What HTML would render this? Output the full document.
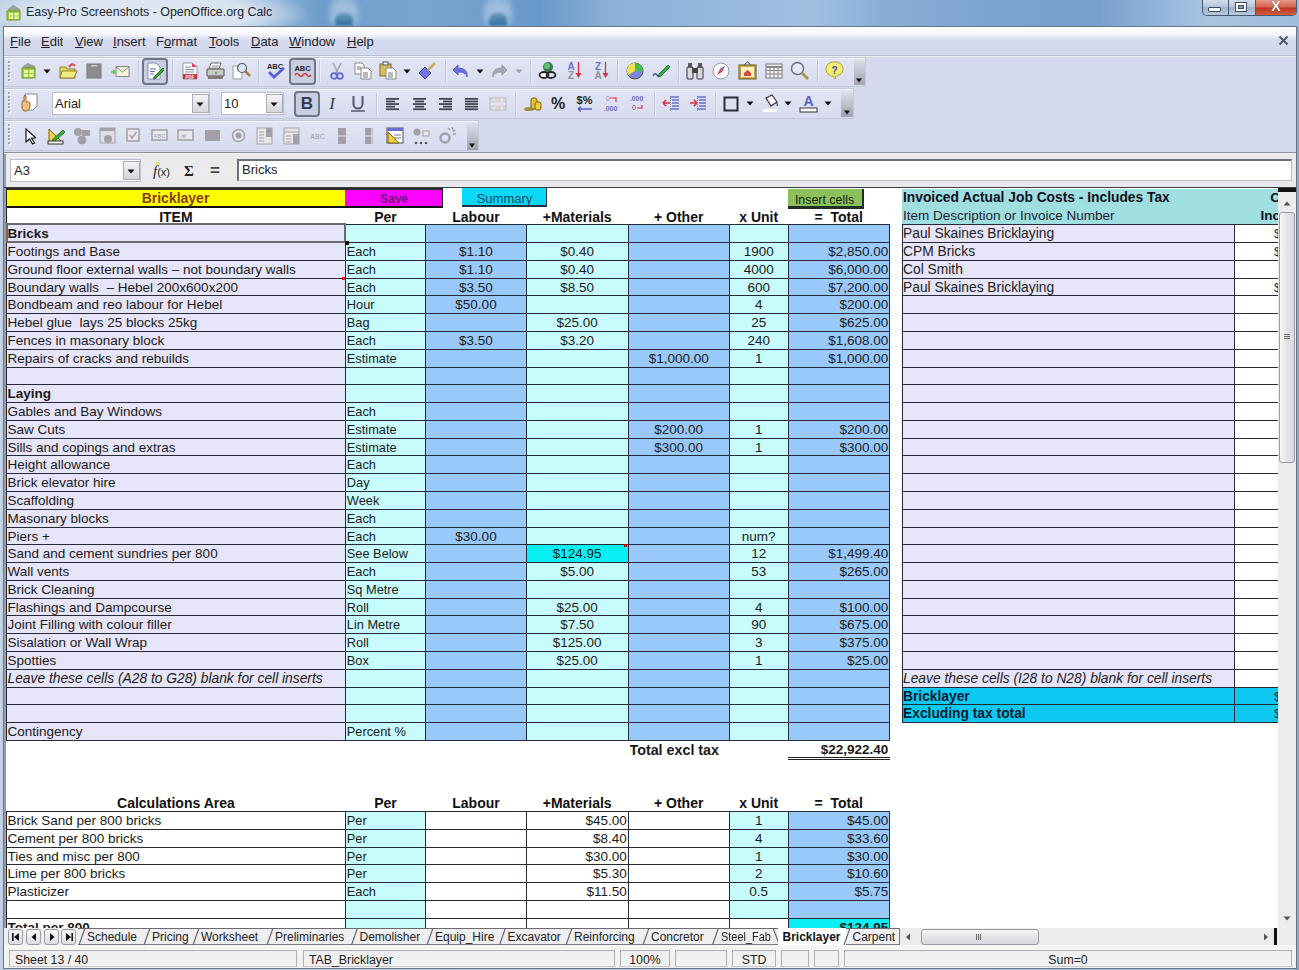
<!DOCTYPE html>
<html><head><meta charset="utf-8"><style>
html,body{margin:0;padding:0}
body{width:1299px;height:970px;overflow:hidden;position:relative;background:linear-gradient(90deg,#c4d4e6 0px,#b8cce2 4px,#a0bcdc 1290px,#8ea4bc 1297px);font-family:"Liberation Sans",sans-serif;font-size:13.5px;color:#1a1a1a}
.a{position:absolute}
.t{white-space:nowrap;overflow:hidden}
</style></head><body>
<div class="a" style="left:0;top:0;width:1299px;height:27px;background:linear-gradient(90deg,#b9cde2 0px,#b4c9e0 230px,#8fb3d8 280px,#6e9ccc 320px,#7aa5d0 420px,#6898ca 540px,#8cb0d8 610px,#96b8dc 720px,#a0c0e0 810px,#8aafd7 880px,#7ca5d1 980px,#78a0ce 1100px,#98b8dc 1170px,#a8c4e0 1210px,#9dbcdc 1299px)"></div><div class="a" style="left:-30px;top:-14px;width:340px;height:56px;background:radial-gradient(closest-side,rgba(228,236,245,0.95) 0%,rgba(222,232,243,0.85) 65%,rgba(210,225,240,0) 100%)"></div><div class="a" style="left:330px;top:-2px;width:28px;height:30px;border-radius:12px;background:rgba(175,200,225,0.75);filter:blur(3px)"></div><div class="a" style="left:335px;top:13px;width:18px;height:13px;border-radius:7px 7px 2px 2px;background:linear-gradient(180deg,rgba(80,140,180,0.7),rgba(40,105,150,0.95));filter:blur(1.5px)"></div><div class="a" style="left:484px;top:-2px;width:28px;height:30px;border-radius:12px;background:rgba(175,200,225,0.75);filter:blur(3px)"></div><div class="a" style="left:489px;top:13px;width:18px;height:13px;border-radius:7px 7px 2px 2px;background:linear-gradient(180deg,rgba(80,140,180,0.7),rgba(40,105,150,0.95));filter:blur(1.5px)"></div><svg class="a" style="left:5px;top:4px" width="17" height="17" viewBox="0 0 17 17"><path d="M3 5 L8 1 L15 5 L15 7 L3 7z" fill="#9aa09a"/><rect x="2" y="7" width="13" height="9" fill="#a8d040" stroke="#6d9a20"/><rect x="4" y="9" width="4" height="2.5" fill="#e8f6b0"/><rect x="9.5" y="9" width="4" height="2.5" fill="#e8f6b0"/><rect x="4" y="12.5" width="4" height="2.5" fill="#e8f6b0"/><rect x="9.5" y="12.5" width="4" height="2.5" fill="#e8f6b0"/></svg><div class="a t" style="left:26px;top:4px;font-size:12.4px;color:#1c2530;line-height:17px">Easy-Pro Screenshots - OpenOffice.org Calc</div><div class="a" style="left:1202px;top:-1px;width:95px;height:17px;box-sizing:border-box;border:1px solid #4a5a70;border-top:none;border-radius:0 0 5px 5px;overflow:hidden;background:linear-gradient(180deg,#d4e0ee 0%,#b8c8dc 45%,#9fb2c8 55%,#b8cade 100%)"><div class="a" style="left:52px;top:0;width:42px;height:17px;background:linear-gradient(180deg,#eaa090 0%,#d86850 45%,#c03a20 55%,#d06048 100%);border-left:1px solid #4a5a70"></div><div class="a" style="left:25px;top:0;width:1px;height:17px;background:#4a5a70"></div></div><div class="a" style="left:1208px;top:7px;width:11px;height:3px;background:#fff;border:1px solid #3a4a60;border-radius:1px"></div><div class="a" style="left:1236px;top:3px;width:6px;height:4px;border:2px solid #fff;box-shadow:0 0 0 1px #3a4a60,inset 0 0 0 1px #3a4a60;background:#8a9ab0"></div><div class="a t" style="left:1255px;top:-2px;width:42px;height:17px;line-height:17px;text-align:center;font-size:14px;font-weight:bold;color:#fff;text-shadow:0 0 1px #400">X</div><div class="a" style="left:3px;top:26px;width:1294px;height:943px;box-sizing:border-box;border:1px solid #6a7688;background:#d5d9ee"></div><div class="a" style="left:4px;top:152px;width:2px;height:816px;background:#9a9ea8"></div><div class="a" style="left:4px;top:27px;width:1292px;height:29px;background:linear-gradient(180deg,#fdfdfe 0%,#f6f7fb 25%,#e2e5f3 36%,#d6daee 45%,#d4d8ed 100%)"></div><div class="a" style="left:4px;top:55px;width:1292px;height:1px;background:#b9bfd6"></div><div class="a" style="left:4px;top:56px;width:1292px;height:1px;background:#eef0f8"></div><div class="a t" style="left:10px;top:33px;font-size:13px;line-height:17px;color:#1e1e2a"><u>F</u>ile</div><div class="a t" style="left:41px;top:33px;font-size:13px;line-height:17px;color:#1e1e2a"><u>E</u>dit</div><div class="a t" style="left:75px;top:33px;font-size:13px;line-height:17px;color:#1e1e2a"><u>V</u>iew</div><div class="a t" style="left:113px;top:33px;font-size:13px;line-height:17px;color:#1e1e2a"><u>I</u>nsert</div><div class="a t" style="left:156px;top:33px;font-size:13px;line-height:17px;color:#1e1e2a">F<u>o</u>rmat</div><div class="a t" style="left:209px;top:33px;font-size:13px;line-height:17px;color:#1e1e2a"><u>T</u>ools</div><div class="a t" style="left:251px;top:33px;font-size:13px;line-height:17px;color:#1e1e2a"><u>D</u>ata</div><div class="a t" style="left:289px;top:33px;font-size:13px;line-height:17px;color:#1e1e2a"><u>W</u>indow</div><div class="a t" style="left:347px;top:33px;font-size:13px;line-height:17px;color:#1e1e2a"><u>H</u>elp</div><svg class="a" style="left:1278px;top:35px" width="11" height="11" viewBox="0 0 11 11"><path d="M1.5 1.5l8 8M9.5 1.5l-8 8" stroke="#505a68" stroke-width="2"/></svg><div class="a" style="left:5px;top:57px;width:861px;height:30px;box-sizing:border-box;border:1px solid #c4c9dc;border-left:none;background:linear-gradient(180deg,#e2e5f4 0%,#d8dcf0 100%);box-shadow:inset 0 1px 0 #f4f5fb"></div><div class="a" style="left:8px;top:61.0px;width:2px;height:2px;background:#9aa0b0;box-shadow:1px 1px 0 #fff"></div><div class="a" style="left:8px;top:64.5px;width:2px;height:2px;background:#9aa0b0;box-shadow:1px 1px 0 #fff"></div><div class="a" style="left:8px;top:68.0px;width:2px;height:2px;background:#9aa0b0;box-shadow:1px 1px 0 #fff"></div><div class="a" style="left:8px;top:71.5px;width:2px;height:2px;background:#9aa0b0;box-shadow:1px 1px 0 #fff"></div><div class="a" style="left:8px;top:75.0px;width:2px;height:2px;background:#9aa0b0;box-shadow:1px 1px 0 #fff"></div><div class="a" style="left:8px;top:78.5px;width:2px;height:2px;background:#9aa0b0;box-shadow:1px 1px 0 #fff"></div><div class="a" style="left:5px;top:88px;width:849px;height:31px;box-sizing:border-box;border:1px solid #c4c9dc;border-left:none;background:linear-gradient(180deg,#e2e5f4 0%,#d8dcf0 100%);box-shadow:inset 0 1px 0 #f4f5fb"></div><div class="a" style="left:8px;top:92.0px;width:2px;height:2px;background:#9aa0b0;box-shadow:1px 1px 0 #fff"></div><div class="a" style="left:8px;top:95.5px;width:2px;height:2px;background:#9aa0b0;box-shadow:1px 1px 0 #fff"></div><div class="a" style="left:8px;top:99.0px;width:2px;height:2px;background:#9aa0b0;box-shadow:1px 1px 0 #fff"></div><div class="a" style="left:8px;top:102.5px;width:2px;height:2px;background:#9aa0b0;box-shadow:1px 1px 0 #fff"></div><div class="a" style="left:8px;top:106.0px;width:2px;height:2px;background:#9aa0b0;box-shadow:1px 1px 0 #fff"></div><div class="a" style="left:8px;top:109.5px;width:2px;height:2px;background:#9aa0b0;box-shadow:1px 1px 0 #fff"></div><div class="a" style="left:5px;top:120px;width:474px;height:31px;box-sizing:border-box;border:1px solid #c4c9dc;border-left:none;background:linear-gradient(180deg,#e2e5f4 0%,#d8dcf0 100%);box-shadow:inset 0 1px 0 #f4f5fb"></div><div class="a" style="left:8px;top:124.0px;width:2px;height:2px;background:#9aa0b0;box-shadow:1px 1px 0 #fff"></div><div class="a" style="left:8px;top:127.5px;width:2px;height:2px;background:#9aa0b0;box-shadow:1px 1px 0 #fff"></div><div class="a" style="left:8px;top:131.0px;width:2px;height:2px;background:#9aa0b0;box-shadow:1px 1px 0 #fff"></div><div class="a" style="left:8px;top:134.5px;width:2px;height:2px;background:#9aa0b0;box-shadow:1px 1px 0 #fff"></div><div class="a" style="left:8px;top:138.0px;width:2px;height:2px;background:#9aa0b0;box-shadow:1px 1px 0 #fff"></div><div class="a" style="left:8px;top:141.5px;width:2px;height:2px;background:#9aa0b0;box-shadow:1px 1px 0 #fff"></div><svg class="a" style="left:20px;top:62px" width="17" height="17" viewBox="0 0 17 17"><path d="M3 4 L8 1 L15 4 L15 6 L3 6z" fill="#9aa09a"/><rect x="2" y="6" width="13" height="10" fill="#9ccf3c" stroke="#6d9a20"/><rect x="4" y="8" width="4" height="3" fill="#e8f6b0"/><rect x="9.5" y="8" width="4" height="3" fill="#e8f6b0"/><rect x="4" y="12" width="4" height="3" fill="#e8f6b0"/><rect x="9.5" y="12" width="4" height="3" fill="#e8f6b0"/></svg><svg class="a" style="left:43px;top:69px" width="8" height="5" viewBox="0 0 8 5"><path d="M0.5 0.5h7l-3.5 4z" fill="#111"/></svg><svg class="a" style="left:59px;top:62px" width="19" height="17" viewBox="0 0 19 17"><path d="M1 5h6l1 2h8v9H1z" fill="#e8d860" stroke="#8a8030"/><path d="M3 9h15l-3 7H1z" fill="#f2ec80" stroke="#8a8030"/><path d="M10 5 Q13 0 16 4" stroke="#e04050" stroke-width="2" fill="none"/></svg><svg class="a" style="left:86px;top:63px" width="16" height="16" viewBox="0 0 16 16"><rect x="1" y="1" width="14" height="14" fill="#8c8c8c" stroke="#777"/><rect x="5" y="2" width="6" height="1.5" fill="#cfcfcf"/></svg><svg class="a" style="left:111px;top:65px" width="19" height="13" viewBox="0 0 19 13"><rect x="5" y="1.5" width="13" height="10" fill="#f4f4e0" stroke="#888"/><path d="M5 2l6.5 5 6.5-5" stroke="#888" fill="none"/><path d="M0 7h5M2 5l3 2-3 2" stroke="#50d050" stroke-width="1.5" fill="none"/></svg><div class="a" style="left:138px;top:60px;width:1px;height:22px;background:#c2c6d8;box-shadow:1px 0 0 #eceef8"></div><div class="a" style="left:142px;top:58px;width:26px;height:27px;box-sizing:border-box;border:2px solid #6f7686;border-radius:4px;background:#c9cde0"></div><svg class="a" style="left:146px;top:62px" width="18" height="18" viewBox="0 0 18 18"><path d="M2 1h8l4 4v12H2z" fill="#fff" stroke="#8890a0"/><path d="M4 7h6M4 9.5h5M4 12h4" stroke="#6070c0"/><path d="M8 15l9-9 1.5 1.5-9 9-2 .5z" fill="#30b040" stroke="#1a6a20"/></svg><div class="a" style="left:172px;top:60px;width:1px;height:22px;background:#c2c6d8;box-shadow:1px 0 0 #eceef8"></div><svg class="a" style="left:182px;top:62px" width="16" height="18" viewBox="0 0 16 18"><path d="M1 1h9l5 4v12H1z" fill="#fff" stroke="#999"/><path d="M10 1v4h5z" fill="#e04050"/><path d="M3 5h6M3 7.5h9M3 10h9" stroke="#8080c0"/><rect x="1" y="12" width="14" height="5" fill="#d03040"/><text x="8" y="16.5" font-size="4.5" fill="#fff" text-anchor="middle" font-family="Liberation Sans" font-weight="bold">PDF</text></svg><svg class="a" style="left:206px;top:62px" width="19" height="18" viewBox="0 0 19 18"><path d="M5 1h10l-2 6H3z" fill="#fff" stroke="#666"/><path d="M1 7h17v7H1z" fill="#c8c8c8" stroke="#555"/><path d="M2 14h15v3H2z" fill="#7c7c7c"/><path d="M6 4h7M5 6h7" stroke="#888"/><circle cx="10" cy="11" r="1" fill="#30a030"/></svg><svg class="a" style="left:232px;top:62px" width="19" height="18" viewBox="0 0 19 18"><path d="M1 4h9v13H1z" fill="#fff" stroke="#999"/><circle cx="10" cy="6" r="4.5" fill="#d8e4f8" stroke="#555" stroke-width="1.2"/><path d="M13 9l5 5" stroke="#a08040" stroke-width="2.5"/></svg><div class="a" style="left:258px;top:60px;width:1px;height:22px;background:#c2c6d8;box-shadow:1px 0 0 #eceef8"></div><svg class="a" style="left:265px;top:61px" width="21" height="19" viewBox="0 0 21 19"><text x="10" y="7.5" font-size="7.5" font-weight="bold" fill="#223" text-anchor="middle" font-family="Liberation Sans">ABC</text><path d="M4 11l5 5 10-9" stroke="#5860d8" stroke-width="2.8" fill="none"/></svg><div class="a" style="left:289px;top:58px;width:27px;height:27px;box-sizing:border-box;border:2px solid #6f7686;border-radius:4px;background:#c9cde0"></div><svg class="a" style="left:292px;top:62px" width="21" height="18" viewBox="0 0 21 18"><text x="10.5" y="9" font-size="7.5" font-weight="bold" fill="#223" text-anchor="middle" font-family="Liberation Sans">ABC</text><path d="M3 13q2-3 4 0t4 0 4 0 4 0" stroke="#e03040" stroke-width="1.4" fill="none"/></svg><div class="a" style="left:319px;top:60px;width:1px;height:22px;background:#c2c6d8;box-shadow:1px 0 0 #eceef8"></div><svg class="a" style="left:329px;top:62px" width="16" height="18" viewBox="0 0 16 18"><path d="M4 1l5 10M12 1L7 11" stroke="#a0a4b0" stroke-width="1.6"/><circle cx="5" cy="14" r="2.8" fill="none" stroke="#6068d0" stroke-width="1.8"/><circle cx="11" cy="14" r="2.8" fill="none" stroke="#6068d0" stroke-width="1.8"/></svg><svg class="a" style="left:354px;top:62px" width="18" height="18" viewBox="0 0 18 18"><path d="M1 1h7l2 2v9H1z" fill="#fff" stroke="#888"/><path d="M7 6h7l3 3v8H7z" fill="#fff" stroke="#888"/><path d="M3 5h4M3 7h4M9 11h5M9 13h5M9 15h5" stroke="#777"/></svg><svg class="a" style="left:379px;top:61px" width="18" height="19" viewBox="0 0 18 19"><rect x="1" y="3" width="11" height="12" fill="#d8c060" stroke="#7a6a20"/><rect x="4" y="1" width="5" height="3" fill="#fff" stroke="#555"/><path d="M7 7h7l3 3v8H7z" fill="#fff" stroke="#888"/><path d="M9 12h5M9 14h5M9 16h5" stroke="#777"/></svg><svg class="a" style="left:403px;top:69px" width="8" height="5" viewBox="0 0 8 5"><path d="M0.5 0.5h7l-3.5 4z" fill="#111"/></svg><svg class="a" style="left:418px;top:62px" width="19" height="18" viewBox="0 0 19 18"><path d="M1 11l6-6 6 6-6 6z" fill="#7078e0" stroke="#3a40a0"/><path d="M10 8l7-7" stroke="#c8b050" stroke-width="2.5"/></svg><div class="a" style="left:445px;top:60px;width:1px;height:22px;background:#c2c6d8;box-shadow:1px 0 0 #eceef8"></div><svg class="a" style="left:452px;top:63px" width="18" height="16" viewBox="0 0 18 16"><path d="M6 2L1 7l5 5V9c5 0 8 1 9 5 1-6-3-9-9-9z" fill="#6a70e8" stroke="#4a50c0" stroke-width="0.8"/></svg><svg class="a" style="left:476px;top:69px" width="8" height="5" viewBox="0 0 8 5"><path d="M0.5 0.5h7l-3.5 4z" fill="#111"/></svg><svg class="a" style="left:490px;top:63px" width="19" height="16" viewBox="0 0 19 16"><path d="M12 2l5 5-5 5V9C7 9 4 10 3 14 2 8 6 5 12 5z" fill="#a8aab0" stroke="#8a8c90" stroke-width="0.8"/></svg><svg class="a" style="left:515px;top:69px" width="8" height="5" viewBox="0 0 8 5"><path d="M0.5 0.5h7l-3.5 4z" fill="#a0a2aa"/></svg><div class="a" style="left:530px;top:60px;width:1px;height:22px;background:#c2c6d8;box-shadow:1px 0 0 #eceef8"></div><svg class="a" style="left:538px;top:61px" width="19" height="19" viewBox="0 0 19 19"><circle cx="10" cy="6" r="5" fill="#3a7a50"/><circle cx="9" cy="5" r="3" fill="#60c070"/><ellipse cx="6" cy="14" rx="4.5" ry="3" fill="#fff" stroke="#222" stroke-width="1.8"/><ellipse cx="13" cy="14" rx="4.5" ry="3" fill="none" stroke="#222" stroke-width="1.8"/></svg><svg class="a" style="left:566px;top:61px" width="17" height="19" viewBox="0 0 17 19"><text x="5" y="8.5" font-size="10" font-weight="bold" fill="#6a70d0" text-anchor="middle" font-family="Liberation Sans">A</text><text x="5" y="18" font-size="10" font-weight="bold" fill="#909098" text-anchor="middle" font-family="Liberation Sans">Z</text><path d="M12.5 1v13" stroke="#d03040" stroke-width="1.3"/><path d="M9.5 12l3 5 3-5z" fill="#d03040"/></svg><svg class="a" style="left:593px;top:61px" width="17" height="19" viewBox="0 0 17 19"><text x="5" y="8.5" font-size="10" font-weight="bold" fill="#6a70d0" text-anchor="middle" font-family="Liberation Sans">Z</text><text x="5" y="18" font-size="10" font-weight="bold" fill="#909098" text-anchor="middle" font-family="Liberation Sans">A</text><path d="M12.5 1v13" stroke="#d03040" stroke-width="1.3"/><path d="M9.5 12l3 5 3-5z" fill="#d03040"/></svg><div class="a" style="left:617px;top:60px;width:1px;height:22px;background:#c2c6d8;box-shadow:1px 0 0 #eceef8"></div><svg class="a" style="left:626px;top:62px" width="18" height="18" viewBox="0 0 18 18"><circle cx="9" cy="9" r="8" fill="#7c86e0" stroke="#555"/><path d="M9 9V1A8 8 0 0 1 17 9z" fill="#40c040"/><path d="M9 9V1A8 8 0 0 0 2 13z" fill="#f0e050"/></svg><svg class="a" style="left:652px;top:62px" width="18" height="18" viewBox="0 0 18 18"><path d="M1 14q2-4 4-1t3 0" stroke="#4a50b0" stroke-width="1.4" fill="none"/><path d="M7 12l9-9 2 2-9 9-3 1z" fill="#30b040" stroke="#1a6a20" stroke-width="0.8"/></svg><div class="a" style="left:678px;top:60px;width:1px;height:22px;background:#c2c6d8;box-shadow:1px 0 0 #eceef8"></div><svg class="a" style="left:686px;top:62px" width="18" height="18" viewBox="0 0 18 18"><rect x="1" y="5" width="6" height="12" rx="1" fill="#d8d8e0" stroke="#333"/><rect x="11" y="5" width="6" height="12" rx="1" fill="#d8d8e0" stroke="#333"/><rect x="2" y="1" width="4" height="5" fill="#555"/><rect x="12" y="1" width="4" height="5" fill="#555"/><rect x="6" y="6" width="6" height="5" fill="#444"/></svg><svg class="a" style="left:712px;top:62px" width="18" height="18" viewBox="0 0 18 18"><circle cx="9" cy="9" r="8" fill="#f8f8f8" stroke="#999"/><path d="M13 4l-3 6-5 3 3-6z" fill="#e04050"/><path d="M13 4l-5 3 2 3z" fill="#6a70d0"/></svg><svg class="a" style="left:738px;top:61px" width="19" height="19" viewBox="0 0 19 19"><path d="M6 4l3.5-3 3.5 3" stroke="#555" fill="none"/><rect x="1" y="4" width="17" height="14" fill="#c8a850" stroke="#6a5a20"/><rect x="3" y="6" width="13" height="10" fill="#fff4c0"/><path d="M6 12l3.5-3 3.5 3v3H6z" fill="#e04040"/></svg><svg class="a" style="left:765px;top:63px" width="18" height="16" viewBox="0 0 18 16"><rect x="1" y="1" width="16" height="14" fill="#f0f0f4" stroke="#777"/><path d="M1 4h16" stroke="#888" stroke-width="2"/><path d="M5 4v11M9 4v11M13 4v11M1 7.5h16M1 11h16" stroke="#888"/></svg><svg class="a" style="left:790px;top:61px" width="19" height="19" viewBox="0 0 19 19"><circle cx="7.5" cy="7.5" r="6" fill="#e4ecfa" stroke="#6a6a70" stroke-width="1.4"/><path d="M12 12l6 6" stroke="#b09050" stroke-width="2.8"/></svg><div class="a" style="left:817px;top:60px;width:1px;height:22px;background:#c2c6d8;box-shadow:1px 0 0 #eceef8"></div><svg class="a" style="left:825px;top:61px" width="19" height="19" viewBox="0 0 19 19"><path d="M9.5 1C4 1 1 4 1 8c0 4 3 7 7 7l2 3 1-3c4-1 7-3 7-7 0-4-3-7-8.5-7z" fill="#f4f070" stroke="#b0a020"/><text x="9.5" y="12.5" font-size="10" font-weight="bold" fill="#4a40b0" text-anchor="middle" font-family="Liberation Sans">?</text></svg><div class="a" style="left:854px;top:59px;width:11px;height:26px;background:linear-gradient(180deg,#dfe1ea 0%,#b8bac4 60%,#9fa2ac 100%)"></div><svg class="a" style="left:855px;top:78px" width="8" height="5" viewBox="0 0 8 5"><path d="M1 0.5h6l-3 4z" fill="#111"/></svg><svg class="a" style="left:20px;top:93px" width="18" height="19" viewBox="0 0 18 19"><path d="M5 1h12v12l-4 4H5z" fill="#fff" stroke="#888"/><path d="M2 10q0-3 2-2v-5q1-1 2 0v6q3-1 4 1v4q-1 4-4 4H4q-3-2-2-8z" fill="#f0c080" stroke="#805020" stroke-width="0.8"/></svg><div class="a" style="left:52px;top:92px;width:158px;height:23px;box-sizing:border-box;border:1px solid #b8bccc;background:#fff"></div><div class="a t" style="left:55px;top:92px;height:23px;line-height:23px;font-size:13px;color:#222">Arial</div><div class="a" style="left:192px;top:94px;width:17px;height:19px;box-sizing:border-box;border:1px solid #a8acb8;background:linear-gradient(180deg,#f4f4f6,#d4d6dc)"></div><svg class="a" style="left:196px;top:102px" width="8" height="5" viewBox="0 0 8 5"><path d="M0.5 0.5h7l-3.5 4z" fill="#111"/></svg><div class="a" style="left:221px;top:92px;width:63px;height:23px;box-sizing:border-box;border:1px solid #b8bccc;background:#fff"></div><div class="a t" style="left:224px;top:92px;height:23px;line-height:23px;font-size:13px;color:#222">10</div><div class="a" style="left:266px;top:94px;width:17px;height:19px;box-sizing:border-box;border:1px solid #a8acb8;background:linear-gradient(180deg,#f4f4f6,#d4d6dc)"></div><svg class="a" style="left:270px;top:102px" width="8" height="5" viewBox="0 0 8 5"><path d="M0.5 0.5h7l-3.5 4z" fill="#111"/></svg><div class="a" style="left:294px;top:91px;width:26px;height:26px;box-sizing:border-box;border:2px solid #6f7686;border-radius:4px;background:#c9cde0"></div><div class="a t" style="left:294px;top:91px;width:26px;height:26px;line-height:26px;text-align:center;font-size:17px;font-weight:bold;color:#333a50">B</div><div class="a t" style="left:323px;top:91px;width:18px;height:26px;line-height:26px;text-align:center;font-size:17px;font-style:italic;color:#333a50;font-family:Liberation Serif">I</div><svg class="a" style="left:350px;top:95px" width="16" height="18" viewBox="0 0 16 18"><path d="M3.5 1v8a4.5 4.5 0 0 0 9 0V1" stroke="#555a70" stroke-width="2" fill="none"/><path d="M1 16h14" stroke="#555a70" stroke-width="1.5"/></svg><div class="a" style="left:376px;top:93px;width:1px;height:22px;background:#c2c6d8;box-shadow:1px 0 0 #eceef8"></div><svg class="a" style="left:386px;top:98px" width="13" height="13" viewBox="0 0 13 13"><rect x="0" y="0.0" width="13" height="1.7" fill="#3c3e48"/><rect x="0" y="2.6" width="9" height="1.7" fill="#3c3e48"/><rect x="0" y="5.2" width="13" height="1.7" fill="#3c3e48"/><rect x="0" y="7.800000000000001" width="9" height="1.7" fill="#3c3e48"/><rect x="0" y="10.4" width="13" height="1.7" fill="#3c3e48"/></svg><svg class="a" style="left:413px;top:98px" width="13" height="13" viewBox="0 0 13 13"><rect x="0.0" y="0.0" width="13" height="1.7" fill="#3c3e48"/><rect x="2.0" y="2.6" width="9" height="1.7" fill="#3c3e48"/><rect x="0.0" y="5.2" width="13" height="1.7" fill="#3c3e48"/><rect x="2.0" y="7.800000000000001" width="9" height="1.7" fill="#3c3e48"/><rect x="0.0" y="10.4" width="13" height="1.7" fill="#3c3e48"/></svg><svg class="a" style="left:439px;top:98px" width="13" height="13" viewBox="0 0 13 13"><rect x="0" y="0.0" width="13" height="1.7" fill="#3c3e48"/><rect x="4" y="2.6" width="9" height="1.7" fill="#3c3e48"/><rect x="0" y="5.2" width="13" height="1.7" fill="#3c3e48"/><rect x="4" y="7.800000000000001" width="9" height="1.7" fill="#3c3e48"/><rect x="0" y="10.4" width="13" height="1.7" fill="#3c3e48"/></svg><svg class="a" style="left:465px;top:98px" width="13" height="13" viewBox="0 0 13 13"><rect x="0" y="0.0" width="13" height="1.7" fill="#3c3e48"/><rect x="0" y="2.6" width="13" height="1.7" fill="#3c3e48"/><rect x="0" y="5.2" width="13" height="1.7" fill="#3c3e48"/><rect x="0" y="7.800000000000001" width="13" height="1.7" fill="#3c3e48"/><rect x="0" y="10.4" width="13" height="1.7" fill="#3c3e48"/></svg><svg class="a" style="left:489px;top:97px" width="18" height="14" viewBox="0 0 18 14"><rect x="1" y="1" width="16" height="12" fill="#d8d8dc" stroke="#b8b8c0"/><path d="M1 7h16M5 1v3M5 10v3M13 1v3M13 10v3" stroke="#f8f8f8"/></svg><div class="a" style="left:515px;top:93px;width:1px;height:22px;background:#c2c6d8;box-shadow:1px 0 0 #eceef8"></div><svg class="a" style="left:523px;top:94px" width="19" height="18" viewBox="0 0 19 18"><ellipse cx="6" cy="15" rx="5" ry="2" fill="#a09040"/><rect x="8" y="4" width="6" height="11" rx="2" fill="#e8c030" stroke="#806010"/><rect x="12" y="8" width="6" height="8" rx="2" fill="#f0d040" stroke="#806010"/></svg><div class="a t" style="left:549px;top:92px;width:18px;height:24px;line-height:24px;text-align:center;font-size:16px;font-weight:bold;color:#222">%</div><svg class="a" style="left:575px;top:94px" width="19" height="19" viewBox="0 0 19 19"><text x="9.5" y="10" font-size="11" font-weight="bold" fill="#222" text-anchor="middle" font-family="Liberation Sans">$%</text><path d="M3 15h14M3 15l3-2.5M3 15l3 2.5" stroke="#5a60c8" stroke-width="1.5" fill="none"/></svg><svg class="a" style="left:602px;top:94px" width="17" height="19" viewBox="0 0 17 19"><text x="4" y="7" font-size="6.5" fill="#7a80d0" font-family="Liberation Sans">0</text><path d="M8 4h6v4" stroke="#d03040" stroke-width="1.2" fill="none"/><text x="8.5" y="16.5" font-size="7" font-weight="bold" fill="#6a70c0" text-anchor="middle" font-family="Liberation Sans">.000</text></svg><svg class="a" style="left:628px;top:94px" width="17" height="19" viewBox="0 0 17 19"><text x="8.5" y="7" font-size="7" font-weight="bold" fill="#6a70c0" text-anchor="middle" font-family="Liberation Sans">.000</text><text x="4" y="16" font-size="7" fill="#555" font-family="Liberation Sans">0</text><path d="M14 11v3H9" stroke="#d03040" stroke-width="1.2" fill="none"/></svg><div class="a" style="left:654px;top:93px;width:1px;height:22px;background:#c2c6d8;box-shadow:1px 0 0 #eceef8"></div><svg class="a" style="left:662px;top:95px" width="18" height="17" viewBox="0 0 18 17"><path d="M8 2h9M10 5h7M10 8h7M10 11h7M8 14h9" stroke="#6a70d0" stroke-width="1.4"/><path d="M1 8h7M1 8l3-3M1 8l3 3" stroke="#e03040" stroke-width="1.6" fill="none"/><path d="M8.5 1v15" stroke="#888" stroke-dasharray="1 1"/></svg><svg class="a" style="left:689px;top:95px" width="18" height="17" viewBox="0 0 18 17"><path d="M8 2h9M10 5h7M10 8h7M10 11h7M8 14h9" stroke="#6a70d0" stroke-width="1.4"/><path d="M1 8h7M8 8l-3-3M8 8l-3 3" stroke="#e03040" stroke-width="1.6" fill="none"/><path d="M8.5 1v15" stroke="#888" stroke-dasharray="1 1"/></svg><div class="a" style="left:715px;top:93px;width:1px;height:22px;background:#c2c6d8;box-shadow:1px 0 0 #eceef8"></div><svg class="a" style="left:723px;top:96px" width="16" height="16" viewBox="0 0 16 16"><rect x="1.5" y="1.5" width="13" height="13" fill="none" stroke="#2a2c38" stroke-width="2"/></svg><svg class="a" style="left:746px;top:101px" width="8" height="5" viewBox="0 0 8 5"><path d="M0.5 0.5h7l-3.5 4z" fill="#111"/></svg><svg class="a" style="left:762px;top:94px" width="17" height="19" viewBox="0 0 17 19"><path d="M4 4l6-3 5 7-6 4z" fill="#fff" stroke="#333" stroke-width="1.2"/><path d="M14 8q2 2 1 4" stroke="#333" fill="none"/><rect x="1" y="15" width="14" height="3" fill="#fff"/></svg><svg class="a" style="left:784px;top:101px" width="8" height="5" viewBox="0 0 8 5"><path d="M0.5 0.5h7l-3.5 4z" fill="#111"/></svg><svg class="a" style="left:799px;top:93px" width="19" height="20" viewBox="0 0 19 20"><text x="9.5" y="13" font-size="14" font-weight="bold" fill="#5a60d0" text-anchor="middle" font-family="Liberation Sans">A</text><rect x="1" y="15" width="17" height="4" fill="#fff" stroke="#333"/></svg><svg class="a" style="left:824px;top:101px" width="8" height="5" viewBox="0 0 8 5"><path d="M0.5 0.5h7l-3.5 4z" fill="#111"/></svg><div class="a" style="left:841px;top:91px;width:12px;height:26px;background:linear-gradient(180deg,#dfe1ea 0%,#b8bac4 60%,#9fa2ac 100%)"></div><svg class="a" style="left:843px;top:110px" width="8" height="5" viewBox="0 0 8 5"><path d="M1 0.5h6l-3 4z" fill="#111"/></svg><svg class="a" style="left:25px;top:128px" width="11" height="17" viewBox="0 0 11 17"><path d="M1 1v13l3.5-3 3 5 2-1-3-5h4.5z" fill="#fff" stroke="#111" stroke-width="1.2"/></svg><svg class="a" style="left:47px;top:127px" width="18" height="18" viewBox="0 0 18 18"><path d="M2 2v13h13z" fill="#f0d040" stroke="#806010"/><path d="M6 12l10-9 2 2-10 9-3 1z" fill="#30b040" stroke="#1a6a20" stroke-width="0.8"/><rect x="1" y="14" width="15" height="3" fill="#fff" stroke="#333"/></svg><svg class="a" style="left:73px;top:127px" width="18" height="18" viewBox="0 0 18 18"><circle cx="5" cy="5" r="4" fill="#a0a0a6"/><rect x="9" y="3" width="8" height="6" fill="#a0a0a6"/><circle cx="9" cy="13" r="4.5" fill="#a0a0a6"/></svg><svg class="a" style="left:99px;top:127px" width="17" height="18" viewBox="0 0 17 18"><rect x="1" y="1" width="15" height="15" fill="#e0e0e4" stroke="#a0a0a6"/><rect x="1" y="1" width="15" height="3" fill="#a0a0a6"/><circle cx="9" cy="12" r="4" fill="#a0a0a6"/></svg><svg class="a" style="left:126px;top:128px" width="14" height="15" viewBox="0 0 14 15"><rect x="1" y="1" width="12" height="12" fill="#e8e8ec" stroke="#a0a0a6" stroke-width="1.5"/><path d="M3.5 7l2.5 3 4.5-6" stroke="#a0a0a6" stroke-width="1.5" fill="none"/></svg><svg class="a" style="left:151px;top:129px" width="17" height="13" viewBox="0 0 17 13"><rect x="1" y="1" width="15" height="10" fill="#e8e8ec" stroke="#a0a0a6" stroke-width="1.5"/><text x="8.5" y="8.5" font-size="6" fill="#a0a0a6" text-anchor="middle" font-family="Liberation Sans">ABC</text></svg><svg class="a" style="left:177px;top:129px" width="17" height="13" viewBox="0 0 17 13"><rect x="1" y="1" width="15" height="10" fill="#e8e8ec" stroke="#a0a0a6" stroke-width="1.5"/><text x="7" y="8.5" font-size="6" fill="#a0a0a6" text-anchor="middle" font-family="Liberation Sans">#/</text></svg><svg class="a" style="left:205px;top:130px" width="15" height="11" viewBox="0 0 15 11"><rect x="0" y="0" width="15" height="11" fill="#a0a0a6"/></svg><svg class="a" style="left:231px;top:128px" width="15" height="15" viewBox="0 0 15 15"><circle cx="7.5" cy="7.5" r="6" fill="#e8e8ec" stroke="#a0a0a6" stroke-width="1.5"/><circle cx="7.5" cy="7.5" r="3" fill="#a0a0a6"/></svg><svg class="a" style="left:256px;top:127px" width="17" height="18" viewBox="0 0 17 18"><rect x="1" y="1" width="15" height="16" fill="#e8e8ec" stroke="#a0a0a6"/><rect x="10" y="1" width="6" height="9" fill="#a0a0a6"/><path d="M3 5h5M3 8h5M3 11h5M3 14h5" stroke="#a0a0a6"/></svg><svg class="a" style="left:283px;top:127px" width="17" height="18" viewBox="0 0 17 18"><rect x="1" y="1" width="15" height="16" fill="#e8e8ec" stroke="#a0a0a6"/><rect x="10" y="7" width="6" height="10" fill="#a0a0a6"/><path d="M1 5h15M3 9h5M3 12h5M3 15h5" stroke="#a0a0a6"/></svg><svg class="a" style="left:309px;top:131px" width="17" height="9" viewBox="0 0 17 9"><text x="8.5" y="7.5" font-size="7" fill="#a0a0a6" text-anchor="middle" font-family="Liberation Sans">ABC</text></svg><svg class="a" style="left:337px;top:127px" width="10" height="18" viewBox="0 0 10 18"><rect x="1" y="1" width="8" height="16" fill="#a0a0a6"/><path d="M1 9h8" stroke="#e8e8ec"/></svg><svg class="a" style="left:364px;top:127px" width="10" height="18" viewBox="0 0 10 18"><rect x="1" y="1" width="8" height="16" fill="#a0a0a6"/><path d="M1 9h8" stroke="#e8e8ec"/><path d="M8 1v16" stroke="#e8e8ec"/></svg><svg class="a" style="left:386px;top:127px" width="18" height="18" viewBox="0 0 18 18"><rect x="1" y="1" width="16" height="15" fill="#fff" stroke="#555"/><rect x="1" y="1" width="16" height="3" fill="#6a70d0"/><path d="M2 16V5l11 11z" fill="#f0d040" stroke="#806010"/><path d="M8 8h7M8 11h7" stroke="#777"/></svg><svg class="a" style="left:412px;top:127px" width="18" height="18" viewBox="0 0 18 18"><circle cx="5" cy="5" r="3.5" fill="#a0a0a6"/><rect x="11" y="4" width="6" height="5" fill="#e8e8ec" stroke="#a0a0a6"/><circle cx="4" cy="16" r="1.3" fill="#555"/><circle cx="9" cy="16" r="1.3" fill="#555"/><circle cx="14" cy="16" r="1.3" fill="#555"/></svg><svg class="a" style="left:439px;top:126px" width="18" height="19" viewBox="0 0 18 19"><circle cx="6" cy="12" r="4.5" fill="none" stroke="#a0a0a6" stroke-width="2.5"/><path d="M9 2l2 2M13 1l1 3M16 4l-2 2M17 8h-3" stroke="#a0a0a6" stroke-width="1.5"/></svg><div class="a" style="left:467px;top:123px;width:11px;height:27px;background:linear-gradient(180deg,#dfe1ea 0%,#b8bac4 60%,#9fa2ac 100%)"></div><svg class="a" style="left:468px;top:143px" width="8" height="5" viewBox="0 0 8 5"><path d="M1 0.5h6l-3 4z" fill="#111"/></svg><div class="a" style="left:6px;top:152px;width:1290px;height:36px;background:linear-gradient(180deg,#e9e9ec 0%,#ececef 60%,#e8e8ea 100%)"></div><div class="a" style="left:4px;top:152px;width:1292px;height:1px;background:#8e9098"></div><div class="a" style="left:4px;top:153px;width:1292px;height:1px;background:#f6f6f8"></div><div class="a" style="left:10px;top:159px;width:131px;height:23px;box-sizing:border-box;border:1px solid #b8bccc;background:#fff"></div><div class="a t" style="left:14px;top:159px;height:23px;line-height:23px;font-size:13px;color:#222">A3</div><div class="a" style="left:123px;top:161px;width:17px;height:19px;box-sizing:border-box;border:1px solid #a8acb8;background:linear-gradient(180deg,#f4f4f6,#d4d6dc)"></div><svg class="a" style="left:127px;top:169px" width="8" height="5" viewBox="0 0 8 5"><path d="M0.5 0.5h7l-3.5 4z" fill="#111"/></svg><div class="a t" style="left:153px;top:161px;height:20px;line-height:20px;font-size:15px;color:#222;font-family:Liberation Serif;font-style:italic">f<span style="font-size:11px;font-style:normal;font-family:Liberation Sans">(x)</span></div><div class="a" style="left:156px;top:162px;width:4px;height:3px;background:#f0e060;border-radius:2px"></div><div class="a t" style="left:184px;top:161px;height:20px;line-height:20px;font-size:15px;font-weight:bold;color:#222;font-family:Liberation Serif">&#931;</div><div class="a t" style="left:210px;top:161px;height:20px;line-height:20px;font-size:17px;font-weight:bold;color:#444">=</div><div class="a" style="left:237px;top:159px;width:1055px;height:22px;box-sizing:border-box;border:1px solid #b8bccc;border-top:2px solid #6a6e78;border-left:2px solid #6a6e78;background:#fff"></div><div class="a t" style="left:242px;top:160px;height:20px;line-height:20px;font-size:13px;color:#222">Bricks</div><div class="a" style="left:4px;top:187px;width:1292px;height:1px;background:#3a3a40"></div>
<div class="a" style="left:6px;top:188px;width:1272px;height:740px;overflow:hidden;background:#fff">
<div class="a" style="left:-6px;top:-188px;width:1299px;height:970px">
<div class="a" style="left:6.00px;top:224.00px;width:339.00px;height:516.00px;background:#e6e4f8"></div>
<div class="a" style="left:345.00px;top:224.00px;width:80.00px;height:516.00px;background:#c8fcfc"></div>
<div class="a" style="left:425.00px;top:224.00px;width:101.00px;height:516.00px;background:#99c9fa"></div>
<div class="a" style="left:526.00px;top:224.00px;width:102.00px;height:516.00px;background:#c8fcfc"></div>
<div class="a" style="left:628.00px;top:224.00px;width:101.00px;height:516.00px;background:#99c9fa"></div>
<div class="a" style="left:729.00px;top:224.00px;width:59.00px;height:516.00px;background:#c8fcfc"></div>
<div class="a" style="left:788.00px;top:224.00px;width:101.00px;height:516.00px;background:#99c9fa"></div>
<div class="a" style="left:902.00px;top:224.00px;width:332.00px;height:463.00px;background:#e6e4f8"></div>
<div class="a" style="left:902.00px;top:189.00px;width:376.00px;height:35.00px;background:#9fdfe0"></div>
<div class="a" style="left:902.00px;top:687.00px;width:376.00px;height:35.00px;background:#0dc8f0"></div>
<div class="a" style="left:6.00px;top:811.00px;width:339.00px;height:117.00px;background:#fff"></div>
<div class="a" style="left:345.00px;top:811.00px;width:80.00px;height:117.00px;background:#c8fcfc"></div>
<div class="a" style="left:425.00px;top:811.00px;width:101.00px;height:117.00px;background:#fff"></div>
<div class="a" style="left:526.00px;top:811.00px;width:102.00px;height:117.00px;background:#fff"></div>
<div class="a" style="left:628.00px;top:811.00px;width:101.00px;height:117.00px;background:#fff"></div>
<div class="a" style="left:729.00px;top:811.00px;width:59.00px;height:117.00px;background:#c8fcfc"></div>
<div class="a" style="left:788.00px;top:811.00px;width:101.00px;height:117.00px;background:#99c9fa"></div>
<div class="a" style="left:526.00px;top:544.00px;width:102.00px;height:18.00px;background:#08f0f4"></div>
<div class="a" style="left:788.00px;top:918.00px;width:101.00px;height:10.00px;background:#08f0f4"></div>
<div class="a" style="left:730.00px;top:919.00px;width:58.00px;height:10.00px;background:#fff"></div>
<div class="a" style="left:6.00px;top:224.00px;width:884.00px;height:1.00px;background:#262a36"></div>
<div class="a" style="left:6.00px;top:242.00px;width:884.00px;height:1.00px;background:#262a36"></div>
<div class="a" style="left:6.00px;top:260.00px;width:884.00px;height:1.00px;background:#262a36"></div>
<div class="a" style="left:6.00px;top:278.00px;width:884.00px;height:1.00px;background:#262a36"></div>
<div class="a" style="left:6.00px;top:295.00px;width:884.00px;height:1.00px;background:#262a36"></div>
<div class="a" style="left:6.00px;top:313.00px;width:884.00px;height:1.00px;background:#262a36"></div>
<div class="a" style="left:6.00px;top:331.00px;width:884.00px;height:1.00px;background:#262a36"></div>
<div class="a" style="left:6.00px;top:349.00px;width:884.00px;height:1.00px;background:#262a36"></div>
<div class="a" style="left:6.00px;top:367.00px;width:884.00px;height:1.00px;background:#262a36"></div>
<div class="a" style="left:6.00px;top:384.00px;width:884.00px;height:1.00px;background:#262a36"></div>
<div class="a" style="left:6.00px;top:402.00px;width:884.00px;height:1.00px;background:#262a36"></div>
<div class="a" style="left:6.00px;top:420.00px;width:884.00px;height:1.00px;background:#262a36"></div>
<div class="a" style="left:6.00px;top:438.00px;width:884.00px;height:1.00px;background:#262a36"></div>
<div class="a" style="left:6.00px;top:455.00px;width:884.00px;height:1.00px;background:#262a36"></div>
<div class="a" style="left:6.00px;top:473.00px;width:884.00px;height:1.00px;background:#262a36"></div>
<div class="a" style="left:6.00px;top:491.00px;width:884.00px;height:1.00px;background:#262a36"></div>
<div class="a" style="left:6.00px;top:509.00px;width:884.00px;height:1.00px;background:#262a36"></div>
<div class="a" style="left:6.00px;top:527.00px;width:884.00px;height:1.00px;background:#262a36"></div>
<div class="a" style="left:6.00px;top:544.00px;width:884.00px;height:1.00px;background:#262a36"></div>
<div class="a" style="left:6.00px;top:562.00px;width:884.00px;height:1.00px;background:#262a36"></div>
<div class="a" style="left:6.00px;top:580.00px;width:884.00px;height:1.00px;background:#262a36"></div>
<div class="a" style="left:6.00px;top:598.00px;width:884.00px;height:1.00px;background:#262a36"></div>
<div class="a" style="left:6.00px;top:615.00px;width:884.00px;height:1.00px;background:#262a36"></div>
<div class="a" style="left:6.00px;top:633.00px;width:884.00px;height:1.00px;background:#262a36"></div>
<div class="a" style="left:6.00px;top:651.00px;width:884.00px;height:1.00px;background:#262a36"></div>
<div class="a" style="left:6.00px;top:669.00px;width:884.00px;height:1.00px;background:#262a36"></div>
<div class="a" style="left:6.00px;top:687.00px;width:884.00px;height:1.00px;background:#262a36"></div>
<div class="a" style="left:6.00px;top:704.00px;width:884.00px;height:1.00px;background:#262a36"></div>
<div class="a" style="left:6.00px;top:722.00px;width:884.00px;height:1.00px;background:#262a36"></div>
<div class="a" style="left:6.00px;top:740.00px;width:884.00px;height:1.00px;background:#262a36"></div>
<div class="a" style="left:6.00px;top:224.00px;width:1.00px;height:517.00px;background:#262a36"></div>
<div class="a" style="left:345.00px;top:224.00px;width:1.00px;height:517.00px;background:#262a36"></div>
<div class="a" style="left:425.00px;top:224.00px;width:1.00px;height:517.00px;background:#262a36"></div>
<div class="a" style="left:526.00px;top:224.00px;width:1.00px;height:517.00px;background:#262a36"></div>
<div class="a" style="left:628.00px;top:224.00px;width:1.00px;height:517.00px;background:#262a36"></div>
<div class="a" style="left:729.00px;top:224.00px;width:1.00px;height:517.00px;background:#262a36"></div>
<div class="a" style="left:788.00px;top:224.00px;width:1.00px;height:517.00px;background:#262a36"></div>
<div class="a" style="left:889.00px;top:224.00px;width:1.00px;height:517.00px;background:#262a36"></div>
<div class="a" style="left:902.00px;top:224.00px;width:377.00px;height:1.00px;background:#262a36"></div>
<div class="a" style="left:902.00px;top:242.00px;width:377.00px;height:1.00px;background:#262a36"></div>
<div class="a" style="left:902.00px;top:260.00px;width:377.00px;height:1.00px;background:#262a36"></div>
<div class="a" style="left:902.00px;top:278.00px;width:377.00px;height:1.00px;background:#262a36"></div>
<div class="a" style="left:902.00px;top:295.00px;width:377.00px;height:1.00px;background:#262a36"></div>
<div class="a" style="left:902.00px;top:313.00px;width:377.00px;height:1.00px;background:#262a36"></div>
<div class="a" style="left:902.00px;top:331.00px;width:377.00px;height:1.00px;background:#262a36"></div>
<div class="a" style="left:902.00px;top:349.00px;width:377.00px;height:1.00px;background:#262a36"></div>
<div class="a" style="left:902.00px;top:367.00px;width:377.00px;height:1.00px;background:#262a36"></div>
<div class="a" style="left:902.00px;top:384.00px;width:377.00px;height:1.00px;background:#262a36"></div>
<div class="a" style="left:902.00px;top:402.00px;width:377.00px;height:1.00px;background:#262a36"></div>
<div class="a" style="left:902.00px;top:420.00px;width:377.00px;height:1.00px;background:#262a36"></div>
<div class="a" style="left:902.00px;top:438.00px;width:377.00px;height:1.00px;background:#262a36"></div>
<div class="a" style="left:902.00px;top:455.00px;width:377.00px;height:1.00px;background:#262a36"></div>
<div class="a" style="left:902.00px;top:473.00px;width:377.00px;height:1.00px;background:#262a36"></div>
<div class="a" style="left:902.00px;top:491.00px;width:377.00px;height:1.00px;background:#262a36"></div>
<div class="a" style="left:902.00px;top:509.00px;width:377.00px;height:1.00px;background:#262a36"></div>
<div class="a" style="left:902.00px;top:527.00px;width:377.00px;height:1.00px;background:#262a36"></div>
<div class="a" style="left:902.00px;top:544.00px;width:377.00px;height:1.00px;background:#262a36"></div>
<div class="a" style="left:902.00px;top:562.00px;width:377.00px;height:1.00px;background:#262a36"></div>
<div class="a" style="left:902.00px;top:580.00px;width:377.00px;height:1.00px;background:#262a36"></div>
<div class="a" style="left:902.00px;top:598.00px;width:377.00px;height:1.00px;background:#262a36"></div>
<div class="a" style="left:902.00px;top:615.00px;width:377.00px;height:1.00px;background:#262a36"></div>
<div class="a" style="left:902.00px;top:633.00px;width:377.00px;height:1.00px;background:#262a36"></div>
<div class="a" style="left:902.00px;top:651.00px;width:377.00px;height:1.00px;background:#262a36"></div>
<div class="a" style="left:902.00px;top:669.00px;width:377.00px;height:1.00px;background:#262a36"></div>
<div class="a" style="left:902.00px;top:687.00px;width:377.00px;height:1.00px;background:#262a36"></div>
<div class="a" style="left:902.00px;top:704.00px;width:377.00px;height:1.00px;background:#262a36"></div>
<div class="a" style="left:902.00px;top:722.00px;width:377.00px;height:1.00px;background:#262a36"></div>
<div class="a" style="left:902.00px;top:224.00px;width:1.00px;height:499.00px;background:#262a36"></div>
<div class="a" style="left:1234.00px;top:224.00px;width:1.00px;height:499.00px;background:#262a36"></div>
<div class="a" style="left:6.00px;top:811.00px;width:884.00px;height:1.00px;background:#262a36"></div>
<div class="a" style="left:6.00px;top:829.00px;width:884.00px;height:1.00px;background:#262a36"></div>
<div class="a" style="left:6.00px;top:847.00px;width:884.00px;height:1.00px;background:#262a36"></div>
<div class="a" style="left:6.00px;top:864.00px;width:884.00px;height:1.00px;background:#262a36"></div>
<div class="a" style="left:6.00px;top:882.00px;width:884.00px;height:1.00px;background:#262a36"></div>
<div class="a" style="left:6.00px;top:900.00px;width:884.00px;height:1.00px;background:#262a36"></div>
<div class="a" style="left:6.00px;top:918.00px;width:884.00px;height:1.00px;background:#262a36"></div>
<div class="a" style="left:6.00px;top:811.00px;width:1.00px;height:118.00px;background:#262a36"></div>
<div class="a" style="left:345.00px;top:811.00px;width:1.00px;height:118.00px;background:#262a36"></div>
<div class="a" style="left:425.00px;top:811.00px;width:1.00px;height:118.00px;background:#262a36"></div>
<div class="a" style="left:526.00px;top:811.00px;width:1.00px;height:118.00px;background:#262a36"></div>
<div class="a" style="left:628.00px;top:811.00px;width:1.00px;height:118.00px;background:#262a36"></div>
<div class="a" style="left:729.00px;top:811.00px;width:1.00px;height:118.00px;background:#262a36"></div>
<div class="a" style="left:788.00px;top:811.00px;width:1.00px;height:118.00px;background:#262a36"></div>
<div class="a" style="left:889.00px;top:811.00px;width:1.00px;height:118.00px;background:#262a36"></div>
<div class="a" style="left:6.00px;top:188.00px;width:339.00px;height:19.00px;background:#ffff00;border-top:2px solid #2a2a2a;box-sizing:border-box"></div>
<div class="a" style="left:345.00px;top:188.00px;width:98.00px;height:19.00px;background:#ff00ff;border-top:2px solid #2a2a2a;border-right:1px solid #222;box-sizing:border-box"></div>
<div class="a" style="left:6.00px;top:206.00px;width:437.00px;height:2.00px;background:#111"></div>
<div class="a" style="left:6.00px;top:188.00px;width:1.00px;height:37.00px;background:#222"></div>
<div class="a t" style="left:6.00px;top:190.00px;width:339.00px;height:17.00px;line-height:17.00px;text-align:center;font-weight:bold;color:#8a3a14;font-size:14px">Bricklayer</div>
<div class="a t" style="left:345.00px;top:191.00px;width:98.00px;height:17.00px;line-height:17.00px;text-align:center;font-weight:bold;color:#6a1a80;font-size:12px">Save</div>
<div class="a" style="left:462.00px;top:188.00px;width:85.00px;height:19.00px;background:#0ad8f6;border-bottom:2px solid #203040;border-right:1px solid #203040;box-sizing:border-box"></div>
<div class="a t" style="left:462.00px;top:190.00px;width:85.00px;height:17.00px;line-height:17.00px;text-align:center;color:#124a6a;font-size:13px">Summary</div>
<div class="a" style="left:788.00px;top:189.00px;width:76.00px;height:20.00px;background:#8cc05a;border-bottom:3px solid #203020;border-right:2px solid #203020;box-sizing:border-box"></div>
<div class="a t" style="left:788.00px;top:191.00px;width:73.00px;height:18.00px;line-height:18.00px;text-align:center;color:#152010;font-size:12.4px">Insert cells</div>
<div class="a t" style="left:6.00px;top:208.52px;width:339.30px;height:16.78px;line-height:16.78px;text-align:center;padding:0 1px 0 1.5px;box-sizing:border-box;font-weight:bold;color:#111;font-size:14px">ITEM</div>
<div class="a t" style="left:345.30px;top:208.52px;width:80.00px;height:16.78px;line-height:16.78px;text-align:center;padding:0 1px 0 1.5px;box-sizing:border-box;font-weight:bold;color:#111;font-size:14px">Per</div>
<div class="a t" style="left:425.30px;top:208.52px;width:100.90px;height:16.78px;line-height:16.78px;text-align:center;padding:0 1px 0 1.5px;box-sizing:border-box;font-weight:bold;color:#111;font-size:14px">Labour</div>
<div class="a t" style="left:526.20px;top:208.52px;width:101.50px;height:16.78px;line-height:16.78px;text-align:center;padding:0 1px 0 1.5px;box-sizing:border-box;font-weight:bold;color:#111;font-size:14px">+Materials</div>
<div class="a t" style="left:627.70px;top:208.52px;width:101.50px;height:16.78px;line-height:16.78px;text-align:center;padding:0 1px 0 1.5px;box-sizing:border-box;font-weight:bold;color:#111;font-size:14px">+ Other</div>
<div class="a t" style="left:729.20px;top:208.52px;width:58.50px;height:16.78px;line-height:16.78px;text-align:center;padding:0 1px 0 1.5px;box-sizing:border-box;font-weight:bold;color:#111;font-size:14px">x Unit</div>
<div class="a t" style="left:787.70px;top:208.52px;width:101.70px;height:16.78px;line-height:16.78px;text-align:center;padding:0 1px 0 1.5px;box-sizing:border-box;font-weight:bold;color:#111;font-size:14px">= &nbsp;Total</div>
<div class="a t" style="left:6.00px;top:226.30px;width:339.30px;height:16.78px;line-height:16.78px;text-align:left;padding:0 1px 0 1.5px;box-sizing:border-box;"><b>Bricks</b></div>
<div class="a t" style="left:6.00px;top:244.08px;width:339.30px;height:16.78px;line-height:16.78px;text-align:left;padding:0 1px 0 1.5px;box-sizing:border-box;">Footings and Base</div>
<div class="a t" style="left:345.30px;top:244.08px;width:80.00px;height:16.78px;line-height:16.78px;text-align:left;padding:0 1px 0 1.5px;box-sizing:border-box;font-size:12.8px">Each</div>
<div class="a t" style="left:425.30px;top:244.08px;width:100.90px;height:16.78px;line-height:16.78px;text-align:center;padding:0 1px 0 1.5px;box-sizing:border-box;">$1.10</div>
<div class="a t" style="left:526.20px;top:244.08px;width:101.50px;height:16.78px;line-height:16.78px;text-align:center;padding:0 1px 0 1.5px;box-sizing:border-box;">$0.40</div>
<div class="a t" style="left:729.20px;top:244.08px;width:58.50px;height:16.78px;line-height:16.78px;text-align:center;padding:0 1px 0 1.5px;box-sizing:border-box;">1900</div>
<div class="a t" style="left:787.70px;top:244.08px;width:101.70px;height:16.78px;line-height:16.78px;text-align:right;padding:0 1px 0 1.5px;box-sizing:border-box;">$2,850.00</div>
<div class="a t" style="left:6.00px;top:261.86px;width:339.30px;height:16.78px;line-height:16.78px;text-align:left;padding:0 1px 0 1.5px;box-sizing:border-box;">Ground floor external walls – not boundary walls</div>
<div class="a t" style="left:345.30px;top:261.86px;width:80.00px;height:16.78px;line-height:16.78px;text-align:left;padding:0 1px 0 1.5px;box-sizing:border-box;font-size:12.8px">Each</div>
<div class="a t" style="left:425.30px;top:261.86px;width:100.90px;height:16.78px;line-height:16.78px;text-align:center;padding:0 1px 0 1.5px;box-sizing:border-box;">$1.10</div>
<div class="a t" style="left:526.20px;top:261.86px;width:101.50px;height:16.78px;line-height:16.78px;text-align:center;padding:0 1px 0 1.5px;box-sizing:border-box;">$0.40</div>
<div class="a t" style="left:729.20px;top:261.86px;width:58.50px;height:16.78px;line-height:16.78px;text-align:center;padding:0 1px 0 1.5px;box-sizing:border-box;">4000</div>
<div class="a t" style="left:787.70px;top:261.86px;width:101.70px;height:16.78px;line-height:16.78px;text-align:right;padding:0 1px 0 1.5px;box-sizing:border-box;">$6,000.00</div>
<div class="a t" style="left:6.00px;top:279.64px;width:339.30px;height:16.78px;line-height:16.78px;text-align:left;padding:0 1px 0 1.5px;box-sizing:border-box;">Boundary walls &nbsp;– Hebel 200x600x200</div>
<div class="a t" style="left:345.30px;top:279.64px;width:80.00px;height:16.78px;line-height:16.78px;text-align:left;padding:0 1px 0 1.5px;box-sizing:border-box;font-size:12.8px">Each</div>
<div class="a t" style="left:425.30px;top:279.64px;width:100.90px;height:16.78px;line-height:16.78px;text-align:center;padding:0 1px 0 1.5px;box-sizing:border-box;">$3.50</div>
<div class="a t" style="left:526.20px;top:279.64px;width:101.50px;height:16.78px;line-height:16.78px;text-align:center;padding:0 1px 0 1.5px;box-sizing:border-box;">$8.50</div>
<div class="a t" style="left:729.20px;top:279.64px;width:58.50px;height:16.78px;line-height:16.78px;text-align:center;padding:0 1px 0 1.5px;box-sizing:border-box;">600</div>
<div class="a t" style="left:787.70px;top:279.64px;width:101.70px;height:16.78px;line-height:16.78px;text-align:right;padding:0 1px 0 1.5px;box-sizing:border-box;">$7,200.00</div>
<div class="a t" style="left:6.00px;top:297.42px;width:339.30px;height:16.78px;line-height:16.78px;text-align:left;padding:0 1px 0 1.5px;box-sizing:border-box;">Bondbeam and reo labour for Hebel</div>
<div class="a t" style="left:345.30px;top:297.42px;width:80.00px;height:16.78px;line-height:16.78px;text-align:left;padding:0 1px 0 1.5px;box-sizing:border-box;font-size:12.8px">Hour</div>
<div class="a t" style="left:425.30px;top:297.42px;width:100.90px;height:16.78px;line-height:16.78px;text-align:center;padding:0 1px 0 1.5px;box-sizing:border-box;">$50.00</div>
<div class="a t" style="left:729.20px;top:297.42px;width:58.50px;height:16.78px;line-height:16.78px;text-align:center;padding:0 1px 0 1.5px;box-sizing:border-box;">4</div>
<div class="a t" style="left:787.70px;top:297.42px;width:101.70px;height:16.78px;line-height:16.78px;text-align:right;padding:0 1px 0 1.5px;box-sizing:border-box;">$200.00</div>
<div class="a t" style="left:6.00px;top:315.20px;width:339.30px;height:16.78px;line-height:16.78px;text-align:left;padding:0 1px 0 1.5px;box-sizing:border-box;">Hebel glue &nbsp;lays 25 blocks 25kg</div>
<div class="a t" style="left:345.30px;top:315.20px;width:80.00px;height:16.78px;line-height:16.78px;text-align:left;padding:0 1px 0 1.5px;box-sizing:border-box;font-size:12.8px">Bag</div>
<div class="a t" style="left:526.20px;top:315.20px;width:101.50px;height:16.78px;line-height:16.78px;text-align:center;padding:0 1px 0 1.5px;box-sizing:border-box;">$25.00</div>
<div class="a t" style="left:729.20px;top:315.20px;width:58.50px;height:16.78px;line-height:16.78px;text-align:center;padding:0 1px 0 1.5px;box-sizing:border-box;">25</div>
<div class="a t" style="left:787.70px;top:315.20px;width:101.70px;height:16.78px;line-height:16.78px;text-align:right;padding:0 1px 0 1.5px;box-sizing:border-box;">$625.00</div>
<div class="a t" style="left:6.00px;top:332.98px;width:339.30px;height:16.78px;line-height:16.78px;text-align:left;padding:0 1px 0 1.5px;box-sizing:border-box;">Fences in masonary block</div>
<div class="a t" style="left:345.30px;top:332.98px;width:80.00px;height:16.78px;line-height:16.78px;text-align:left;padding:0 1px 0 1.5px;box-sizing:border-box;font-size:12.8px">Each</div>
<div class="a t" style="left:425.30px;top:332.98px;width:100.90px;height:16.78px;line-height:16.78px;text-align:center;padding:0 1px 0 1.5px;box-sizing:border-box;">$3.50</div>
<div class="a t" style="left:526.20px;top:332.98px;width:101.50px;height:16.78px;line-height:16.78px;text-align:center;padding:0 1px 0 1.5px;box-sizing:border-box;">$3.20</div>
<div class="a t" style="left:729.20px;top:332.98px;width:58.50px;height:16.78px;line-height:16.78px;text-align:center;padding:0 1px 0 1.5px;box-sizing:border-box;">240</div>
<div class="a t" style="left:787.70px;top:332.98px;width:101.70px;height:16.78px;line-height:16.78px;text-align:right;padding:0 1px 0 1.5px;box-sizing:border-box;">$1,608.00</div>
<div class="a t" style="left:6.00px;top:350.76px;width:339.30px;height:16.78px;line-height:16.78px;text-align:left;padding:0 1px 0 1.5px;box-sizing:border-box;">Repairs of cracks and rebuilds</div>
<div class="a t" style="left:345.30px;top:350.76px;width:80.00px;height:16.78px;line-height:16.78px;text-align:left;padding:0 1px 0 1.5px;box-sizing:border-box;font-size:12.8px">Estimate</div>
<div class="a t" style="left:627.70px;top:350.76px;width:101.50px;height:16.78px;line-height:16.78px;text-align:center;padding:0 1px 0 1.5px;box-sizing:border-box;">$1,000.00</div>
<div class="a t" style="left:729.20px;top:350.76px;width:58.50px;height:16.78px;line-height:16.78px;text-align:center;padding:0 1px 0 1.5px;box-sizing:border-box;">1</div>
<div class="a t" style="left:787.70px;top:350.76px;width:101.70px;height:16.78px;line-height:16.78px;text-align:right;padding:0 1px 0 1.5px;box-sizing:border-box;">$1,000.00</div>
<div class="a t" style="left:6.00px;top:386.32px;width:339.30px;height:16.78px;line-height:16.78px;text-align:left;padding:0 1px 0 1.5px;box-sizing:border-box;"><b>Laying</b></div>
<div class="a t" style="left:6.00px;top:404.10px;width:339.30px;height:16.78px;line-height:16.78px;text-align:left;padding:0 1px 0 1.5px;box-sizing:border-box;">Gables and Bay Windows</div>
<div class="a t" style="left:345.30px;top:404.10px;width:80.00px;height:16.78px;line-height:16.78px;text-align:left;padding:0 1px 0 1.5px;box-sizing:border-box;font-size:12.8px">Each</div>
<div class="a t" style="left:6.00px;top:421.88px;width:339.30px;height:16.78px;line-height:16.78px;text-align:left;padding:0 1px 0 1.5px;box-sizing:border-box;">Saw Cuts</div>
<div class="a t" style="left:345.30px;top:421.88px;width:80.00px;height:16.78px;line-height:16.78px;text-align:left;padding:0 1px 0 1.5px;box-sizing:border-box;font-size:12.8px">Estimate</div>
<div class="a t" style="left:627.70px;top:421.88px;width:101.50px;height:16.78px;line-height:16.78px;text-align:center;padding:0 1px 0 1.5px;box-sizing:border-box;">$200.00</div>
<div class="a t" style="left:729.20px;top:421.88px;width:58.50px;height:16.78px;line-height:16.78px;text-align:center;padding:0 1px 0 1.5px;box-sizing:border-box;">1</div>
<div class="a t" style="left:787.70px;top:421.88px;width:101.70px;height:16.78px;line-height:16.78px;text-align:right;padding:0 1px 0 1.5px;box-sizing:border-box;">$200.00</div>
<div class="a t" style="left:6.00px;top:439.66px;width:339.30px;height:16.78px;line-height:16.78px;text-align:left;padding:0 1px 0 1.5px;box-sizing:border-box;">Sills and copings and extras</div>
<div class="a t" style="left:345.30px;top:439.66px;width:80.00px;height:16.78px;line-height:16.78px;text-align:left;padding:0 1px 0 1.5px;box-sizing:border-box;font-size:12.8px">Estimate</div>
<div class="a t" style="left:627.70px;top:439.66px;width:101.50px;height:16.78px;line-height:16.78px;text-align:center;padding:0 1px 0 1.5px;box-sizing:border-box;">$300.00</div>
<div class="a t" style="left:729.20px;top:439.66px;width:58.50px;height:16.78px;line-height:16.78px;text-align:center;padding:0 1px 0 1.5px;box-sizing:border-box;">1</div>
<div class="a t" style="left:787.70px;top:439.66px;width:101.70px;height:16.78px;line-height:16.78px;text-align:right;padding:0 1px 0 1.5px;box-sizing:border-box;">$300.00</div>
<div class="a t" style="left:6.00px;top:457.44px;width:339.30px;height:16.78px;line-height:16.78px;text-align:left;padding:0 1px 0 1.5px;box-sizing:border-box;">Height allowance</div>
<div class="a t" style="left:345.30px;top:457.44px;width:80.00px;height:16.78px;line-height:16.78px;text-align:left;padding:0 1px 0 1.5px;box-sizing:border-box;font-size:12.8px">Each</div>
<div class="a t" style="left:6.00px;top:475.22px;width:339.30px;height:16.78px;line-height:16.78px;text-align:left;padding:0 1px 0 1.5px;box-sizing:border-box;">Brick elevator hire</div>
<div class="a t" style="left:345.30px;top:475.22px;width:80.00px;height:16.78px;line-height:16.78px;text-align:left;padding:0 1px 0 1.5px;box-sizing:border-box;font-size:12.8px">Day</div>
<div class="a t" style="left:6.00px;top:493.00px;width:339.30px;height:16.78px;line-height:16.78px;text-align:left;padding:0 1px 0 1.5px;box-sizing:border-box;">Scaffolding</div>
<div class="a t" style="left:345.30px;top:493.00px;width:80.00px;height:16.78px;line-height:16.78px;text-align:left;padding:0 1px 0 1.5px;box-sizing:border-box;font-size:12.8px">Week</div>
<div class="a t" style="left:6.00px;top:510.78px;width:339.30px;height:16.78px;line-height:16.78px;text-align:left;padding:0 1px 0 1.5px;box-sizing:border-box;">Masonary blocks</div>
<div class="a t" style="left:345.30px;top:510.78px;width:80.00px;height:16.78px;line-height:16.78px;text-align:left;padding:0 1px 0 1.5px;box-sizing:border-box;font-size:12.8px">Each</div>
<div class="a t" style="left:6.00px;top:528.56px;width:339.30px;height:16.78px;line-height:16.78px;text-align:left;padding:0 1px 0 1.5px;box-sizing:border-box;">Piers +</div>
<div class="a t" style="left:345.30px;top:528.56px;width:80.00px;height:16.78px;line-height:16.78px;text-align:left;padding:0 1px 0 1.5px;box-sizing:border-box;font-size:12.8px">Each</div>
<div class="a t" style="left:425.30px;top:528.56px;width:100.90px;height:16.78px;line-height:16.78px;text-align:center;padding:0 1px 0 1.5px;box-sizing:border-box;">$30.00</div>
<div class="a t" style="left:729.20px;top:528.56px;width:58.50px;height:16.78px;line-height:16.78px;text-align:center;padding:0 1px 0 1.5px;box-sizing:border-box;">num?</div>
<div class="a t" style="left:6.00px;top:546.34px;width:339.30px;height:16.78px;line-height:16.78px;text-align:left;padding:0 1px 0 1.5px;box-sizing:border-box;">Sand and cement sundries per 800</div>
<div class="a t" style="left:345.30px;top:546.34px;width:80.00px;height:16.78px;line-height:16.78px;text-align:left;padding:0 1px 0 1.5px;box-sizing:border-box;font-size:12.8px">See Below</div>
<div class="a t" style="left:526.20px;top:546.34px;width:101.50px;height:16.78px;line-height:16.78px;text-align:center;padding:0 1px 0 1.5px;box-sizing:border-box;">$124.95</div>
<div class="a t" style="left:729.20px;top:546.34px;width:58.50px;height:16.78px;line-height:16.78px;text-align:center;padding:0 1px 0 1.5px;box-sizing:border-box;">12</div>
<div class="a t" style="left:787.70px;top:546.34px;width:101.70px;height:16.78px;line-height:16.78px;text-align:right;padding:0 1px 0 1.5px;box-sizing:border-box;">$1,499.40</div>
<div class="a t" style="left:6.00px;top:564.12px;width:339.30px;height:16.78px;line-height:16.78px;text-align:left;padding:0 1px 0 1.5px;box-sizing:border-box;">Wall vents</div>
<div class="a t" style="left:345.30px;top:564.12px;width:80.00px;height:16.78px;line-height:16.78px;text-align:left;padding:0 1px 0 1.5px;box-sizing:border-box;font-size:12.8px">Each</div>
<div class="a t" style="left:526.20px;top:564.12px;width:101.50px;height:16.78px;line-height:16.78px;text-align:center;padding:0 1px 0 1.5px;box-sizing:border-box;">$5.00</div>
<div class="a t" style="left:729.20px;top:564.12px;width:58.50px;height:16.78px;line-height:16.78px;text-align:center;padding:0 1px 0 1.5px;box-sizing:border-box;">53</div>
<div class="a t" style="left:787.70px;top:564.12px;width:101.70px;height:16.78px;line-height:16.78px;text-align:right;padding:0 1px 0 1.5px;box-sizing:border-box;">$265.00</div>
<div class="a t" style="left:6.00px;top:581.90px;width:339.30px;height:16.78px;line-height:16.78px;text-align:left;padding:0 1px 0 1.5px;box-sizing:border-box;">Brick Cleaning</div>
<div class="a t" style="left:345.30px;top:581.90px;width:80.00px;height:16.78px;line-height:16.78px;text-align:left;padding:0 1px 0 1.5px;box-sizing:border-box;font-size:12.8px">Sq Metre</div>
<div class="a t" style="left:6.00px;top:599.68px;width:339.30px;height:16.78px;line-height:16.78px;text-align:left;padding:0 1px 0 1.5px;box-sizing:border-box;">Flashings and Dampcourse</div>
<div class="a t" style="left:345.30px;top:599.68px;width:80.00px;height:16.78px;line-height:16.78px;text-align:left;padding:0 1px 0 1.5px;box-sizing:border-box;font-size:12.8px">Roll</div>
<div class="a t" style="left:526.20px;top:599.68px;width:101.50px;height:16.78px;line-height:16.78px;text-align:center;padding:0 1px 0 1.5px;box-sizing:border-box;">$25.00</div>
<div class="a t" style="left:729.20px;top:599.68px;width:58.50px;height:16.78px;line-height:16.78px;text-align:center;padding:0 1px 0 1.5px;box-sizing:border-box;">4</div>
<div class="a t" style="left:787.70px;top:599.68px;width:101.70px;height:16.78px;line-height:16.78px;text-align:right;padding:0 1px 0 1.5px;box-sizing:border-box;">$100.00</div>
<div class="a t" style="left:6.00px;top:617.46px;width:339.30px;height:16.78px;line-height:16.78px;text-align:left;padding:0 1px 0 1.5px;box-sizing:border-box;">Joint Filling with colour filler</div>
<div class="a t" style="left:345.30px;top:617.46px;width:80.00px;height:16.78px;line-height:16.78px;text-align:left;padding:0 1px 0 1.5px;box-sizing:border-box;font-size:12.8px">Lin Metre</div>
<div class="a t" style="left:526.20px;top:617.46px;width:101.50px;height:16.78px;line-height:16.78px;text-align:center;padding:0 1px 0 1.5px;box-sizing:border-box;">$7.50</div>
<div class="a t" style="left:729.20px;top:617.46px;width:58.50px;height:16.78px;line-height:16.78px;text-align:center;padding:0 1px 0 1.5px;box-sizing:border-box;">90</div>
<div class="a t" style="left:787.70px;top:617.46px;width:101.70px;height:16.78px;line-height:16.78px;text-align:right;padding:0 1px 0 1.5px;box-sizing:border-box;">$675.00</div>
<div class="a t" style="left:6.00px;top:635.24px;width:339.30px;height:16.78px;line-height:16.78px;text-align:left;padding:0 1px 0 1.5px;box-sizing:border-box;">Sisalation or Wall Wrap</div>
<div class="a t" style="left:345.30px;top:635.24px;width:80.00px;height:16.78px;line-height:16.78px;text-align:left;padding:0 1px 0 1.5px;box-sizing:border-box;font-size:12.8px">Roll</div>
<div class="a t" style="left:526.20px;top:635.24px;width:101.50px;height:16.78px;line-height:16.78px;text-align:center;padding:0 1px 0 1.5px;box-sizing:border-box;">$125.00</div>
<div class="a t" style="left:729.20px;top:635.24px;width:58.50px;height:16.78px;line-height:16.78px;text-align:center;padding:0 1px 0 1.5px;box-sizing:border-box;">3</div>
<div class="a t" style="left:787.70px;top:635.24px;width:101.70px;height:16.78px;line-height:16.78px;text-align:right;padding:0 1px 0 1.5px;box-sizing:border-box;">$375.00</div>
<div class="a t" style="left:6.00px;top:653.02px;width:339.30px;height:16.78px;line-height:16.78px;text-align:left;padding:0 1px 0 1.5px;box-sizing:border-box;">Spotties</div>
<div class="a t" style="left:345.30px;top:653.02px;width:80.00px;height:16.78px;line-height:16.78px;text-align:left;padding:0 1px 0 1.5px;box-sizing:border-box;font-size:12.8px">Box</div>
<div class="a t" style="left:526.20px;top:653.02px;width:101.50px;height:16.78px;line-height:16.78px;text-align:center;padding:0 1px 0 1.5px;box-sizing:border-box;">$25.00</div>
<div class="a t" style="left:729.20px;top:653.02px;width:58.50px;height:16.78px;line-height:16.78px;text-align:center;padding:0 1px 0 1.5px;box-sizing:border-box;">1</div>
<div class="a t" style="left:787.70px;top:653.02px;width:101.70px;height:16.78px;line-height:16.78px;text-align:right;padding:0 1px 0 1.5px;box-sizing:border-box;">$25.00</div>
<div class="a t" style="left:6.00px;top:670.80px;width:339.30px;height:16.78px;line-height:16.78px;text-align:left;padding:0 1px 0 1.5px;box-sizing:border-box;"><i style="font-size:13.8px">Leave these cells (A28 to G28) blank for cell inserts</i></div>
<div class="a t" style="left:6.00px;top:724.14px;width:339.30px;height:16.78px;line-height:16.78px;text-align:left;padding:0 1px 0 1.5px;box-sizing:border-box;">Contingency</div>
<div class="a t" style="left:345.30px;top:724.14px;width:80.00px;height:16.78px;line-height:16.78px;text-align:left;padding:0 1px 0 1.5px;box-sizing:border-box;font-size:12.8px">Percent %</div>
<div class="a t" style="left:629.50px;top:741.92px;width:100.00px;height:16.78px;line-height:16.78px;font-weight:bold;font-size:14.3px">Total excl tax</div>
<div class="a t" style="left:787.70px;top:741.92px;width:101.70px;height:16.78px;line-height:16.78px;text-align:right;padding:0 1px 0 1.5px;box-sizing:border-box;font-weight:bold">$22,922.40</div>
<div class="a" style="left:788.00px;top:757.00px;width:102.00px;height:1.00px;background:#222"></div>
<div class="a" style="left:788.00px;top:759.00px;width:102.00px;height:1.00px;background:#222"></div>
<div class="a t" style="left:6.00px;top:795.26px;width:339.30px;height:16.78px;line-height:16.78px;text-align:center;padding:0 1px 0 1.5px;box-sizing:border-box;font-weight:bold;color:#111;font-size:14px">Calculations Area</div>
<div class="a t" style="left:345.30px;top:795.26px;width:80.00px;height:16.78px;line-height:16.78px;text-align:center;padding:0 1px 0 1.5px;box-sizing:border-box;font-weight:bold;color:#111;font-size:14px">Per</div>
<div class="a t" style="left:425.30px;top:795.26px;width:100.90px;height:16.78px;line-height:16.78px;text-align:center;padding:0 1px 0 1.5px;box-sizing:border-box;font-weight:bold;color:#111;font-size:14px">Labour</div>
<div class="a t" style="left:526.20px;top:795.26px;width:101.50px;height:16.78px;line-height:16.78px;text-align:center;padding:0 1px 0 1.5px;box-sizing:border-box;font-weight:bold;color:#111;font-size:14px">+Materials</div>
<div class="a t" style="left:627.70px;top:795.26px;width:101.50px;height:16.78px;line-height:16.78px;text-align:center;padding:0 1px 0 1.5px;box-sizing:border-box;font-weight:bold;color:#111;font-size:14px">+ Other</div>
<div class="a t" style="left:729.20px;top:795.26px;width:58.50px;height:16.78px;line-height:16.78px;text-align:center;padding:0 1px 0 1.5px;box-sizing:border-box;font-weight:bold;color:#111;font-size:14px">x Unit</div>
<div class="a t" style="left:787.70px;top:795.26px;width:101.70px;height:16.78px;line-height:16.78px;text-align:center;padding:0 1px 0 1.5px;box-sizing:border-box;font-weight:bold;color:#111;font-size:14px">= &nbsp;Total</div>
<div class="a t" style="left:6.00px;top:813.04px;width:339.30px;height:16.78px;line-height:16.78px;text-align:left;padding:0 1px 0 1.5px;box-sizing:border-box;">Brick Sand per 800 bricks</div>
<div class="a t" style="left:345.30px;top:813.04px;width:80.00px;height:16.78px;line-height:16.78px;text-align:left;padding:0 1px 0 1.5px;box-sizing:border-box;font-size:12.8px">Per</div>
<div class="a t" style="left:526.20px;top:813.04px;width:101.50px;height:16.78px;line-height:16.78px;text-align:right;padding:0 1px 0 1.5px;box-sizing:border-box;">$45.00</div>
<div class="a t" style="left:729.20px;top:813.04px;width:58.50px;height:16.78px;line-height:16.78px;text-align:center;padding:0 1px 0 1.5px;box-sizing:border-box;">1</div>
<div class="a t" style="left:787.70px;top:813.04px;width:101.70px;height:16.78px;line-height:16.78px;text-align:right;padding:0 1px 0 1.5px;box-sizing:border-box;">$45.00</div>
<div class="a t" style="left:6.00px;top:830.82px;width:339.30px;height:16.78px;line-height:16.78px;text-align:left;padding:0 1px 0 1.5px;box-sizing:border-box;">Cement per 800 bricks</div>
<div class="a t" style="left:345.30px;top:830.82px;width:80.00px;height:16.78px;line-height:16.78px;text-align:left;padding:0 1px 0 1.5px;box-sizing:border-box;font-size:12.8px">Per</div>
<div class="a t" style="left:526.20px;top:830.82px;width:101.50px;height:16.78px;line-height:16.78px;text-align:right;padding:0 1px 0 1.5px;box-sizing:border-box;">$8.40</div>
<div class="a t" style="left:729.20px;top:830.82px;width:58.50px;height:16.78px;line-height:16.78px;text-align:center;padding:0 1px 0 1.5px;box-sizing:border-box;">4</div>
<div class="a t" style="left:787.70px;top:830.82px;width:101.70px;height:16.78px;line-height:16.78px;text-align:right;padding:0 1px 0 1.5px;box-sizing:border-box;">$33.60</div>
<div class="a t" style="left:6.00px;top:848.60px;width:339.30px;height:16.78px;line-height:16.78px;text-align:left;padding:0 1px 0 1.5px;box-sizing:border-box;">Ties and misc per 800</div>
<div class="a t" style="left:345.30px;top:848.60px;width:80.00px;height:16.78px;line-height:16.78px;text-align:left;padding:0 1px 0 1.5px;box-sizing:border-box;font-size:12.8px">Per</div>
<div class="a t" style="left:526.20px;top:848.60px;width:101.50px;height:16.78px;line-height:16.78px;text-align:right;padding:0 1px 0 1.5px;box-sizing:border-box;">$30.00</div>
<div class="a t" style="left:729.20px;top:848.60px;width:58.50px;height:16.78px;line-height:16.78px;text-align:center;padding:0 1px 0 1.5px;box-sizing:border-box;">1</div>
<div class="a t" style="left:787.70px;top:848.60px;width:101.70px;height:16.78px;line-height:16.78px;text-align:right;padding:0 1px 0 1.5px;box-sizing:border-box;">$30.00</div>
<div class="a t" style="left:6.00px;top:866.38px;width:339.30px;height:16.78px;line-height:16.78px;text-align:left;padding:0 1px 0 1.5px;box-sizing:border-box;">Lime per 800 bricks</div>
<div class="a t" style="left:345.30px;top:866.38px;width:80.00px;height:16.78px;line-height:16.78px;text-align:left;padding:0 1px 0 1.5px;box-sizing:border-box;font-size:12.8px">Per</div>
<div class="a t" style="left:526.20px;top:866.38px;width:101.50px;height:16.78px;line-height:16.78px;text-align:right;padding:0 1px 0 1.5px;box-sizing:border-box;">$5.30</div>
<div class="a t" style="left:729.20px;top:866.38px;width:58.50px;height:16.78px;line-height:16.78px;text-align:center;padding:0 1px 0 1.5px;box-sizing:border-box;">2</div>
<div class="a t" style="left:787.70px;top:866.38px;width:101.70px;height:16.78px;line-height:16.78px;text-align:right;padding:0 1px 0 1.5px;box-sizing:border-box;">$10.60</div>
<div class="a t" style="left:6.00px;top:884.16px;width:339.30px;height:16.78px;line-height:16.78px;text-align:left;padding:0 1px 0 1.5px;box-sizing:border-box;">Plasticizer</div>
<div class="a t" style="left:345.30px;top:884.16px;width:80.00px;height:16.78px;line-height:16.78px;text-align:left;padding:0 1px 0 1.5px;box-sizing:border-box;font-size:12.8px">Each</div>
<div class="a t" style="left:526.20px;top:884.16px;width:101.50px;height:16.78px;line-height:16.78px;text-align:right;padding:0 1px 0 1.5px;box-sizing:border-box;">$11.50</div>
<div class="a t" style="left:729.20px;top:884.16px;width:58.50px;height:16.78px;line-height:16.78px;text-align:center;padding:0 1px 0 1.5px;box-sizing:border-box;">0.5</div>
<div class="a t" style="left:787.70px;top:884.16px;width:101.70px;height:16.78px;line-height:16.78px;text-align:right;padding:0 1px 0 1.5px;box-sizing:border-box;">$5.75</div>
<div class="a t" style="left:6.00px;top:919.72px;width:339.30px;height:16.78px;line-height:16.78px;text-align:left;padding:0 1px 0 1.5px;box-sizing:border-box;"><b>Total per 800</b></div>
<div class="a t" style="left:787.70px;top:919.72px;width:101.70px;height:16.78px;line-height:16.78px;text-align:right;padding:0 1px 0 1.5px;box-sizing:border-box;"><b>$124.95</b></div>
<div class="a t" style="left:903.00px;top:189.00px;width:375.00px;height:17.00px;line-height:17.00px;font-size:13.8px;color:#112"><b>Invoiced Actual Job Costs - Includes Tax</b></div>
<div class="a t" style="left:903.00px;top:207.00px;width:375.00px;height:17.00px;line-height:17.00px;color:#223">Item Description or Invoice Number</div>
<div class="a t" style="left:1234.00px;top:189.00px;width:44.00px;height:17.00px;line-height:17.00px;text-align:right;color:#112;margin-left:2px"><b>C</b></div>
<div class="a t" style="left:1234.00px;top:207.00px;width:44.00px;height:17.00px;line-height:17.00px;text-align:right;color:#112;margin-left:2px"><b>Inc</b></div>
<div class="a t" style="left:903.00px;top:226.30px;width:330.00px;height:16.78px;line-height:16.78px;color:#222;font-size:13.8px">Paul Skaines Bricklaying</div>
<div class="a t" style="left:903.00px;top:244.08px;width:330.00px;height:16.78px;line-height:16.78px;color:#222;font-size:13.8px">CPM Bricks</div>
<div class="a t" style="left:903.00px;top:261.86px;width:330.00px;height:16.78px;line-height:16.78px;color:#222;font-size:13.8px">Col Smith</div>
<div class="a t" style="left:903.00px;top:279.64px;width:330.00px;height:16.78px;line-height:16.78px;color:#222;font-size:13.8px">Paul Skaines Bricklaying</div>
<div class="a t" style="left:903.00px;top:670.80px;width:330.00px;height:16.78px;line-height:16.78px;color:#222"><i style="font-size:13.8px">Leave these cells (I28 to N28) blank for cell inserts</i></div>
<div class="a t" style="left:903.00px;top:688.58px;width:330.00px;height:16.78px;line-height:16.78px;color:#0a1a30;font-size:13.8px"><b>Bricklayer</b></div>
<div class="a t" style="left:903.00px;top:706.36px;width:330.00px;height:16.78px;line-height:16.78px;color:#0a1a30;font-size:13.8px"><b>Excluding tax total</b></div>
<div class="a t" style="left:1274.00px;top:226.30px;width:4.00px;height:16.78px;line-height:16.78px;overflow:hidden;color:#333">$</div>
<div class="a t" style="left:1274.00px;top:244.08px;width:4.00px;height:16.78px;line-height:16.78px;overflow:hidden;color:#333">$</div>
<div class="a t" style="left:1274.00px;top:279.64px;width:4.00px;height:16.78px;line-height:16.78px;overflow:hidden;color:#333">$</div>
<div class="a t" style="left:1274.00px;top:688.58px;width:4.00px;height:16.78px;line-height:16.78px;overflow:hidden;color:#333">$</div>
<div class="a t" style="left:1274.00px;top:706.36px;width:4.00px;height:16.78px;line-height:16.78px;overflow:hidden;color:#333">$</div>
<div class="a" style="left:342.00px;top:277.00px;width:3.00px;height:3.00px;background:#e02020"></div>
<div class="a" style="left:624.00px;top:544.00px;width:3.00px;height:3.00px;background:#c01010"></div>
<div class="a" style="left:6.00px;top:223.00px;width:340.00px;height:20.00px;border:2px solid #6a6a6a;box-sizing:border-box"></div>
<div class="a" style="left:345.00px;top:241.00px;width:4.00px;height:4.00px;background:#111"></div>
</div></div>
<div class="a" style="left:4px;top:928px;width:1274px;height:19px;background:#efeff2"></div><div class="a" style="left:8px;top:929px;width:15px;height:16px;box-sizing:border-box;border:1px solid #9a9aa4;border-radius:3px;background:linear-gradient(180deg,#fafafa,#dcdce2)"></div><div class="a" style="left:26px;top:929px;width:15px;height:16px;box-sizing:border-box;border:1px solid #9a9aa4;border-radius:3px;background:linear-gradient(180deg,#fafafa,#dcdce2)"></div><div class="a" style="left:44px;top:929px;width:15px;height:16px;box-sizing:border-box;border:1px solid #9a9aa4;border-radius:3px;background:linear-gradient(180deg,#fafafa,#dcdce2)"></div><div class="a" style="left:61px;top:929px;width:15px;height:16px;box-sizing:border-box;border:1px solid #9a9aa4;border-radius:3px;background:linear-gradient(180deg,#fafafa,#dcdce2)"></div><svg class="a" style="left:10px;top:932px" width="12" height="10" viewBox="0 0 12 10"><rect x="2" y="1" width="1.6" height="8" fill="#111"/><path d="M9 1v8L4 5z" fill="#111"/></svg><svg class="a" style="left:28px;top:932px" width="12" height="10" viewBox="0 0 12 10"><path d="M8 1v8L3.5 5z" fill="#111"/></svg><svg class="a" style="left:46px;top:932px" width="12" height="10" viewBox="0 0 12 10"><path d="M4 1v8l4.5-4z" fill="#111"/></svg><svg class="a" style="left:63px;top:932px" width="12" height="10" viewBox="0 0 12 10"><path d="M3 1v8l5-4z" fill="#111"/><rect x="8.4" y="1" width="1.6" height="8" fill="#111"/></svg><div class="a" style="left:78px;top:944px;width:822px;height:2px;background:#7a7a80"></div><div class="a" style="left:78px;top:928px;width:822px;height:1px;background:#6a6a70"></div><svg class="a" style="left:78px;top:927px" width="10" height="19" viewBox="0 0 10 19"><path d="M1.0 18 L7.0 1" stroke="#606068" stroke-width="1.1" fill="none"/></svg><div class="a t" style="left:87.0px;top:929px;height:16px;line-height:16px;font-size:12px;color:#222;">Schedule</div><svg class="a" style="left:143px;top:927px" width="10" height="19" viewBox="0 0 10 19"><path d="M1.0 18 L7.0 1" stroke="#606068" stroke-width="1.1" fill="none"/></svg><div class="a t" style="left:152.0px;top:929px;height:16px;line-height:16px;font-size:12px;color:#222;">Pricing</div><svg class="a" style="left:192px;top:927px" width="10" height="19" viewBox="0 0 10 19"><path d="M1.0 18 L7.0 1" stroke="#606068" stroke-width="1.1" fill="none"/></svg><div class="a t" style="left:201.0px;top:929px;height:16px;line-height:16px;font-size:12px;color:#222;">Worksheet</div><svg class="a" style="left:266px;top:927px" width="10" height="19" viewBox="0 0 10 19"><path d="M1.0 18 L7.0 1" stroke="#606068" stroke-width="1.1" fill="none"/></svg><div class="a t" style="left:275.0px;top:929px;height:16px;line-height:16px;font-size:12px;color:#222;">Preliminaries</div><svg class="a" style="left:350px;top:927px" width="10" height="19" viewBox="0 0 10 19"><path d="M1.5 18 L7.5 1" stroke="#606068" stroke-width="1.1" fill="none"/></svg><div class="a t" style="left:359.5px;top:929px;height:16px;line-height:16px;font-size:12px;color:#222;">Demolisher</div><svg class="a" style="left:426px;top:927px" width="10" height="19" viewBox="0 0 10 19"><path d="M1.0 18 L7.0 1" stroke="#606068" stroke-width="1.1" fill="none"/></svg><div class="a t" style="left:435.0px;top:929px;height:16px;line-height:16px;font-size:12px;color:#222;">Equip_Hire</div><svg class="a" style="left:498px;top:927px" width="10" height="19" viewBox="0 0 10 19"><path d="M1.5 18 L7.5 1" stroke="#606068" stroke-width="1.1" fill="none"/></svg><div class="a t" style="left:507.5px;top:929px;height:16px;line-height:16px;font-size:12px;color:#222;">Excavator</div><svg class="a" style="left:565px;top:927px" width="10" height="19" viewBox="0 0 10 19"><path d="M1.0 18 L7.0 1" stroke="#606068" stroke-width="1.1" fill="none"/></svg><div class="a t" style="left:574.0px;top:929px;height:16px;line-height:16px;font-size:12px;color:#222;">Reinforcing</div><svg class="a" style="left:642px;top:927px" width="10" height="19" viewBox="0 0 10 19"><path d="M1.0 18 L7.0 1" stroke="#606068" stroke-width="1.1" fill="none"/></svg><div class="a t" style="left:651.0px;top:929px;height:16px;line-height:16px;font-size:12px;color:#222;">Concretor</div><svg class="a" style="left:711px;top:927px" width="10" height="19" viewBox="0 0 10 19"><path d="M1.5 18 L7.5 1" stroke="#606068" stroke-width="1.1" fill="none"/></svg><div class="a t" style="left:720.5px;top:929px;height:16px;line-height:16px;font-size:12px;color:#222;transform:scaleX(0.91);transform-origin:0 0;">Steel_Fab</div><svg class="a" style="left:771px;top:927px" width="10" height="19" viewBox="0 0 10 19"><path d="M2 1 L8.5 18" stroke="#606068" stroke-width="1.1" fill="none"/></svg><div class="a" style="left:778px;top:928px;width:68px;height:18px;background:#fff"></div><div class="a t" style="left:782.5px;top:929px;height:16px;line-height:16px;font-size:12px;font-weight:bold;color:#111">Bricklayer</div><svg class="a" style="left:843px;top:927px" width="10" height="19" viewBox="0 0 10 19"><path d="M1 18 L7 1" stroke="#606068" stroke-width="1.1" fill="none"/></svg><div class="a t" style="left:852.5px;top:929px;width:42px;height:16px;line-height:16px;font-size:12px;color:#222">Carpenter</div><div class="a" style="left:899px;top:928px;width:1px;height:18px;background:#777"></div><div class="a" style="left:901px;top:928px;width:377px;height:18px;background:#ececef"></div><svg class="a" style="left:905px;top:933px" width="6" height="8" viewBox="0 0 6 8"><path d="M5 0.5v7L1 4z" fill="#555"/></svg><div class="a" style="left:921px;top:929px;width:118px;height:16px;box-sizing:border-box;border:1px solid #9a9aa4;border-radius:3px;background:linear-gradient(180deg,#f8f8f8 0%,#e4e4e8 50%,#d8d8de 100%)"></div><div class="a" style="left:976px;top:934px;width:6px;height:6px;background:repeating-linear-gradient(90deg,#666 0 1px,transparent 1px 2px)"></div><svg class="a" style="left:1263px;top:933px" width="6" height="8" viewBox="0 0 6 8"><path d="M1 0.5v7L5 4z" fill="#555"/></svg><div class="a" style="left:1274px;top:928px;width:3px;height:17px;background:#111"></div><div class="a" style="left:1278px;top:188px;width:18px;height:758px;background:#ececef"></div><div class="a" style="left:1278px;top:188px;width:18px;height:4px;background:#111"></div><svg class="a" style="left:1283px;top:200px" width="8" height="6" viewBox="0 0 8 6"><path d="M0.5 5.5h7L4 1.5z" fill="#555"/></svg><div class="a" style="left:1279px;top:212px;width:16px;height:251px;box-sizing:border-box;border:1px solid #9a9aa4;border-radius:3px;background:linear-gradient(90deg,#f8f8f8 0%,#e4e4e8 50%,#d8d8de 100%)"></div><div class="a" style="left:1284px;top:334px;width:6px;height:6px;background:repeating-linear-gradient(180deg,#666 0 1px,transparent 1px 2px)"></div><svg class="a" style="left:1283px;top:916px" width="8" height="6" viewBox="0 0 8 6"><path d="M0.5 0.5h7L4 4.5z" fill="#555"/></svg><div class="a" style="left:4px;top:945px;width:1292px;height:23px;background:linear-gradient(180deg,#f6f6f6,#f0f0f0)"></div><div class="a" style="left:9px;top:950px;width:288px;height:17px;box-sizing:border-box;border:1px solid #aeb0b6;border-bottom-color:#c8c8cc;background:linear-gradient(180deg,#eeeef0,#f3f2f0)"></div><div class="a t" style="left:9px;top:952px;width:288px;height:17px;line-height:17px;font-size:12.3px;color:#222;text-align:left;box-sizing:border-box;padding-left:6px;">Sheet 13 / 40</div><div class="a" style="left:303px;top:950px;width:312px;height:17px;box-sizing:border-box;border:1px solid #aeb0b6;border-bottom-color:#c8c8cc;background:linear-gradient(180deg,#eeeef0,#f3f2f0)"></div><div class="a t" style="left:303px;top:952px;width:312px;height:17px;line-height:17px;font-size:12.3px;color:#222;text-align:left;box-sizing:border-box;padding-left:6px;">TAB_Bricklayer</div><div class="a" style="left:620px;top:950px;width:50px;height:17px;box-sizing:border-box;border:1px solid #aeb0b6;border-bottom-color:#c8c8cc;background:linear-gradient(180deg,#eeeef0,#f3f2f0)"></div><div class="a t" style="left:620px;top:952px;width:50px;height:17px;line-height:17px;font-size:12.3px;color:#222;text-align:center;box-sizing:border-box;">100%</div><div class="a" style="left:675px;top:950px;width:52px;height:17px;box-sizing:border-box;border:1px solid #aeb0b6;border-bottom-color:#c8c8cc;background:linear-gradient(180deg,#eeeef0,#f3f2f0)"></div><div class="a" style="left:732px;top:950px;width:44px;height:17px;box-sizing:border-box;border:1px solid #aeb0b6;border-bottom-color:#c8c8cc;background:linear-gradient(180deg,#eeeef0,#f3f2f0)"></div><div class="a t" style="left:732px;top:952px;width:44px;height:17px;line-height:17px;font-size:12.3px;color:#222;text-align:center;box-sizing:border-box;">STD</div><div class="a" style="left:781px;top:950px;width:28px;height:17px;box-sizing:border-box;border:1px solid #aeb0b6;border-bottom-color:#c8c8cc;background:linear-gradient(180deg,#eeeef0,#f3f2f0)"></div><div class="a" style="left:814px;top:950px;width:25px;height:17px;box-sizing:border-box;border:1px solid #aeb0b6;border-bottom-color:#c8c8cc;background:linear-gradient(180deg,#eeeef0,#f3f2f0)"></div><div class="a" style="left:844px;top:950px;width:448px;height:17px;box-sizing:border-box;border:1px solid #aeb0b6;border-bottom-color:#c8c8cc;background:linear-gradient(180deg,#eeeef0,#f3f2f0)"></div><div class="a t" style="left:844px;top:952px;width:448px;height:17px;line-height:17px;font-size:12.3px;color:#222;text-align:center;box-sizing:border-box;">Sum=0</div>
</body></html>
